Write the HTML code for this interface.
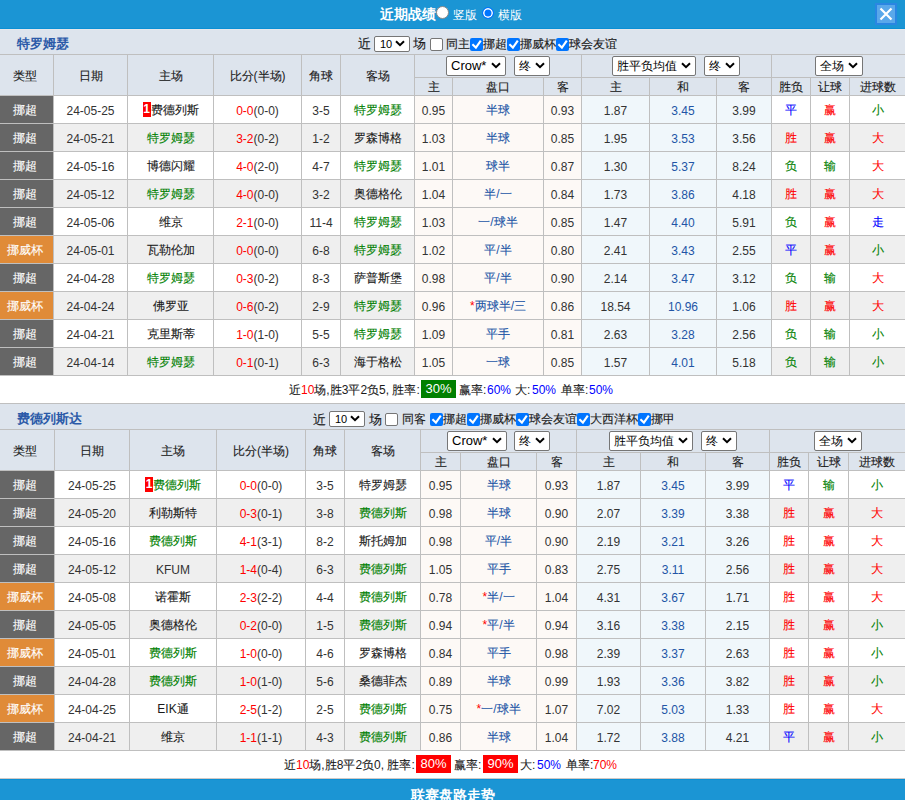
<!DOCTYPE html><html><head><meta charset="utf-8"><style>
*{margin:0;padding:0;box-sizing:content-box}
html,body{width:905px;height:800px;overflow:hidden;background:#fff}
body{position:relative;font-family:"Liberation Sans",sans-serif;font-size:12px;color:#333}
body>div,body>svg{position:absolute}
.t{white-space:nowrap}
.k{-webkit-text-stroke:0.12px currentColor}
.sel{position:absolute;background:#fff;border:1px solid #767676;border-radius:2px;color:#000}
.cb{position:absolute;width:11px;height:11px;border:1px solid #767676;border-radius:2px;background:#fff}
.cb.on{width:13px;height:13px;border:0;background:#0075ff}
.radio{position:absolute;width:11px;height:11px;border:1px solid #888;border-radius:50%;background:#fff}
.radio.on{width:10px;height:10px;border:1px solid #0075ff;box-shadow:inset 0 0 0 1.5px #fff;background:#0075ff}
.badge{display:inline-block;background:#f00;color:#fff;font-size:12px;line-height:15px;height:15px;width:8px;text-align:center;vertical-align:middle;position:relative;top:-1px;font-weight:bold}
.box{display:inline-block;color:#fff;font-size:13px;line-height:17px;height:17px;padding:0 3px;vertical-align:middle;position:relative;top:-1px}
.sum{font-size:12px;color:#1a1a1a}
</style></head><body><div style="left:0px;top:0px;width:905px;height:28px;background:#1b95d4;"></div><div style="left:0px;top:28px;width:905px;height:1px;background:#0b8fd4;"></div><div style="left:0px;top:29px;width:905px;height:1px;background:#e6e7eb;"></div><div class="t" style="left:380px;top:0;height:28px;line-height:28px;font-size:14px;font-weight:bold;color:#fff">近期战绩</div><div class="radio" style="left:436px;top:6px"></div><div class="t" style="left:453px;top:1px;height:28px;line-height:28px;font-size:12px;color:#fff">竖版</div><div class="radio on" style="left:482px;top:7px"></div><div class="t" style="left:498px;top:1px;height:28px;line-height:28px;font-size:12px;color:#fff">横版</div><div style="left:875px;top:3px;width:22px;height:22px;background:#2a86e2;"></div><div style="left:877px;top:5px;width:18px;height:18px;background:#5aa8ea;"></div><svg style="position:absolute;left:875px;top:3px" width="22" height="22" viewBox="0 0 22 22"><path d="M5.5 5.5 L16.5 16.5 M16.5 5.5 L5.5 16.5" stroke="#fff" stroke-width="2.2" fill="none"/></svg><div style="left:0px;top:30px;width:905px;height:65px;background:#dde4ed;"></div><div class="t" style="left:17px;top:32px;width:200px;height:24px;line-height:24px;color:#2b5aa8;font-size:13px;text-align:left;font-weight:bold">特罗姆瑟</div><div class="t" style="left:358px;top:32px;height:24px;line-height:24px;font-size:13px;color:#1a1a1a"><span class="k">近</span></div><div class="sel" style="left:374px;top:36px;width:34px;height:14px;"><span style="position:absolute;left:5px;top:0;line-height:14px;font-size:11px;white-space:nowrap">10</span><svg width="10" height="7" viewBox="0 0 10 7" style="position:absolute;right:4px;top:3px"><path d="M1 1.2 L5 5.2 L9 1.2" fill="none" stroke="#000" stroke-width="2"/></svg></div><div class="t" style="left:413px;top:32px;height:24px;line-height:24px;font-size:13px;color:#1a1a1a"><span class="k">场</span></div><div class="cb" style="left:430px;top:38px"></div><div class="t" style="left:446px;top:32px;height:24px;line-height:24px;font-size:12px;color:#1a1a1a"><span class="k">同主</span></div><div class="cb on" style="left:470px;top:38px"><svg width="13" height="13" viewBox="0 0 13 13" style="position:absolute;left:0;top:0"><path d="M2.4 6.3 L5.9 9.6 L10.8 2.6" fill="none" stroke="#fff" stroke-width="2.1"/></svg></div><div class="t" style="left:483px;top:32px;height:24px;line-height:24px;font-size:12px;color:#1a1a1a"><span class="k">挪超</span></div><div class="cb on" style="left:507px;top:38px"><svg width="13" height="13" viewBox="0 0 13 13" style="position:absolute;left:0;top:0"><path d="M2.4 6.3 L5.9 9.6 L10.8 2.6" fill="none" stroke="#fff" stroke-width="2.1"/></svg></div><div class="t" style="left:520px;top:32px;height:24px;line-height:24px;font-size:12px;color:#1a1a1a"><span class="k">挪威杯</span></div><div class="cb on" style="left:556px;top:38px"><svg width="13" height="13" viewBox="0 0 13 13" style="position:absolute;left:0;top:0"><path d="M2.4 6.3 L5.9 9.6 L10.8 2.6" fill="none" stroke="#fff" stroke-width="2.1"/></svg></div><div class="t" style="left:569px;top:32px;height:24px;line-height:24px;font-size:12px;color:#1a1a1a"><span class="k">球会友谊</span></div><div style="left:0px;top:54px;width:905px;height:1px;background:#bfbfbf;"></div><div style="left:414px;top:77px;width:491px;height:1px;background:#bfbfbf;"></div><div style="left:0px;top:95px;width:905px;height:1px;background:#bfbfbf;"></div><div style="left:53px;top:54px;width:1px;height:41px;background:#bfbfbf;"></div><div style="left:127px;top:54px;width:1px;height:41px;background:#bfbfbf;"></div><div style="left:213px;top:54px;width:1px;height:41px;background:#bfbfbf;"></div><div style="left:301px;top:54px;width:1px;height:41px;background:#bfbfbf;"></div><div style="left:340px;top:54px;width:1px;height:41px;background:#bfbfbf;"></div><div style="left:414px;top:54px;width:1px;height:41px;background:#bfbfbf;"></div><div style="left:581px;top:54px;width:1px;height:41px;background:#bfbfbf;"></div><div style="left:771px;top:54px;width:1px;height:41px;background:#bfbfbf;"></div><div style="left:452px;top:77px;width:1px;height:18px;background:#bfbfbf;"></div><div style="left:543px;top:77px;width:1px;height:18px;background:#bfbfbf;"></div><div style="left:649px;top:77px;width:1px;height:18px;background:#bfbfbf;"></div><div style="left:716px;top:77px;width:1px;height:18px;background:#bfbfbf;"></div><div style="left:810px;top:77px;width:1px;height:18px;background:#bfbfbf;"></div><div style="left:849px;top:77px;width:1px;height:18px;background:#bfbfbf;"></div><div class="t" style="left:-2px;top:56px;width:53px;height:40px;line-height:40px;color:#1a1a1a;font-size:12px;text-align:center;"><span class="k">类型</span></div><div class="t" style="left:54px;top:56px;width:73px;height:40px;line-height:40px;color:#1a1a1a;font-size:12px;text-align:center;"><span class="k">日期</span></div><div class="t" style="left:128px;top:56px;width:85px;height:40px;line-height:40px;color:#1a1a1a;font-size:12px;text-align:center;"><span class="k">主场</span></div><div class="t" style="left:214px;top:56px;width:87px;height:40px;line-height:40px;color:#1a1a1a;font-size:12px;text-align:center;"><span class="k">比分</span>(<span class="k">半场</span>)</div><div class="t" style="left:302px;top:56px;width:38px;height:40px;line-height:40px;color:#1a1a1a;font-size:12px;text-align:center;"><span class="k">角球</span></div><div class="t" style="left:341px;top:56px;width:73px;height:40px;line-height:40px;color:#1a1a1a;font-size:12px;text-align:center;"><span class="k">客场</span></div><div class="t" style="left:415px;top:79px;width:37px;height:17px;line-height:17px;color:#1a1a1a;font-size:12px;text-align:center;"><span class="k">主</span></div><div class="t" style="left:453px;top:79px;width:90px;height:17px;line-height:17px;color:#1a1a1a;font-size:12px;text-align:center;"><span class="k">盘口</span></div><div class="t" style="left:544px;top:79px;width:37px;height:17px;line-height:17px;color:#1a1a1a;font-size:12px;text-align:center;"><span class="k">客</span></div><div class="t" style="left:582px;top:79px;width:67px;height:17px;line-height:17px;color:#1a1a1a;font-size:12px;text-align:center;"><span class="k">主</span></div><div class="t" style="left:650px;top:79px;width:66px;height:17px;line-height:17px;color:#1a1a1a;font-size:12px;text-align:center;"><span class="k">和</span></div><div class="t" style="left:717px;top:79px;width:54px;height:17px;line-height:17px;color:#1a1a1a;font-size:12px;text-align:center;"><span class="k">客</span></div><div class="t" style="left:772px;top:79px;width:38px;height:17px;line-height:17px;color:#1a1a1a;font-size:12px;text-align:center;"><span class="k">胜负</span></div><div class="t" style="left:811px;top:79px;width:38px;height:17px;line-height:17px;color:#1a1a1a;font-size:12px;text-align:center;"><span class="k">让球</span></div><div class="t" style="left:850px;top:79px;width:55px;height:17px;line-height:17px;color:#1a1a1a;font-size:12px;text-align:center;"><span class="k">进球数</span></div><div class="sel" style="left:446px;top:56px;width:58px;height:18px;"><span style="position:absolute;left:4px;top:0;line-height:18px;font-size:13px;white-space:nowrap">Crow*</span><svg width="10" height="7" viewBox="0 0 10 7" style="position:absolute;right:4px;top:5px"><path d="M1 1.2 L5 5.2 L9 1.2" fill="none" stroke="#000" stroke-width="2"/></svg></div><div class="sel" style="left:514px;top:56px;width:34px;height:18px;"><span style="position:absolute;left:4px;top:0;line-height:18px;font-size:12px;white-space:nowrap">终</span><svg width="10" height="7" viewBox="0 0 10 7" style="position:absolute;right:4px;top:5px"><path d="M1 1.2 L5 5.2 L9 1.2" fill="none" stroke="#000" stroke-width="2"/></svg></div><div class="sel" style="left:612px;top:56px;width:82px;height:18px;"><span style="position:absolute;left:4px;top:0;line-height:18px;font-size:12px;white-space:nowrap">胜平负均值</span><svg width="10" height="7" viewBox="0 0 10 7" style="position:absolute;right:4px;top:5px"><path d="M1 1.2 L5 5.2 L9 1.2" fill="none" stroke="#000" stroke-width="2"/></svg></div><div class="sel" style="left:704px;top:56px;width:34px;height:18px;"><span style="position:absolute;left:4px;top:0;line-height:18px;font-size:12px;white-space:nowrap">终</span><svg width="10" height="7" viewBox="0 0 10 7" style="position:absolute;right:4px;top:5px"><path d="M1 1.2 L5 5.2 L9 1.2" fill="none" stroke="#000" stroke-width="2"/></svg></div><div class="sel" style="left:815px;top:56px;width:46px;height:18px;"><span style="position:absolute;left:4px;top:0;line-height:18px;font-size:12px;white-space:nowrap">全场</span><svg width="10" height="7" viewBox="0 0 10 7" style="position:absolute;right:4px;top:5px"><path d="M1 1.2 L5 5.2 L9 1.2" fill="none" stroke="#000" stroke-width="2"/></svg></div><div style="left:0px;top:96px;width:53px;height:27px;background:#666666;"></div><div style="left:54px;top:96px;width:73px;height:27px;background:#ffffff;"></div><div style="left:128px;top:96px;width:85px;height:27px;background:#ffffff;"></div><div style="left:214px;top:96px;width:87px;height:27px;background:#ffffff;"></div><div style="left:302px;top:96px;width:38px;height:27px;background:#ffffff;"></div><div style="left:341px;top:96px;width:73px;height:27px;background:#ffffff;"></div><div style="left:415px;top:96px;width:37px;height:27px;background:#fdf9f6;"></div><div style="left:453px;top:96px;width:90px;height:27px;background:#fdf9f6;"></div><div style="left:544px;top:96px;width:37px;height:27px;background:#fdf9f6;"></div><div style="left:582px;top:96px;width:67px;height:27px;background:#f0f7fb;"></div><div style="left:650px;top:96px;width:66px;height:27px;background:#f0f7fb;"></div><div style="left:717px;top:96px;width:54px;height:27px;background:#f0f7fb;"></div><div style="left:772px;top:96px;width:38px;height:27px;background:#ffffff;"></div><div style="left:811px;top:96px;width:38px;height:27px;background:#ffffff;"></div><div style="left:850px;top:96px;width:55px;height:27px;background:#ffffff;"></div><div class="t" style="left:-2px;top:97px;width:53px;height:27px;line-height:27px;color:#fff;font-size:12px;text-align:center;"><span class="k">挪超</span></div><div class="t" style="left:54px;top:98px;width:73px;height:27px;line-height:27px;color:#333;font-size:12px;text-align:center;">24-05-25</div><div class="t" style="left:128px;top:97px;width:85px;height:27px;line-height:27px;color:#1a1a1a;font-size:12px;text-align:center;"><span class="badge">1</span><span class="k">费德列斯</span></div><div class="t" style="left:214px;top:98px;width:87px;height:27px;line-height:27px;color:#333;font-size:12px;text-align:center;"><span style="color:#ff0000">0-0</span><span style="color:#333">(0-0)</span></div><div class="t" style="left:302px;top:98px;width:38px;height:27px;line-height:27px;color:#333;font-size:12px;text-align:center;">3-5</div><div class="t" style="left:341px;top:97px;width:73px;height:27px;line-height:27px;color:#008000;font-size:12px;text-align:center;"><span class="k">特罗姆瑟</span></div><div class="t" style="left:415px;top:98px;width:37px;height:27px;line-height:27px;color:#333;font-size:12px;text-align:center;">0.95</div><div class="t" style="left:453px;top:97px;width:90px;height:27px;line-height:27px;color:#2255a6;font-size:12px;text-align:center;"><span class="k">半球</span></div><div class="t" style="left:544px;top:98px;width:37px;height:27px;line-height:27px;color:#333;font-size:12px;text-align:center;">0.93</div><div class="t" style="left:582px;top:98px;width:67px;height:27px;line-height:27px;color:#333;font-size:12px;text-align:center;">1.87</div><div class="t" style="left:650px;top:98px;width:66px;height:27px;line-height:27px;color:#2255a6;font-size:12px;text-align:center;">3.45</div><div class="t" style="left:717px;top:98px;width:54px;height:27px;line-height:27px;color:#333;font-size:12px;text-align:center;">3.99</div><div class="t" style="left:772px;top:97px;width:38px;height:27px;line-height:27px;color:#0000ff;font-size:12px;text-align:center;"><span class="k">平</span></div><div class="t" style="left:811px;top:97px;width:38px;height:27px;line-height:27px;color:#ff0000;font-size:12px;text-align:center;"><span class="k">赢</span></div><div class="t" style="left:850px;top:97px;width:55px;height:27px;line-height:27px;color:#008000;font-size:12px;text-align:center;"><span class="k">小</span></div><div style="left:0px;top:123px;width:905px;height:1px;background:#bfbfbf;"></div><div style="left:53px;top:96px;width:1px;height:27px;background:#bfbfbf;"></div><div style="left:127px;top:96px;width:1px;height:27px;background:#bfbfbf;"></div><div style="left:213px;top:96px;width:1px;height:27px;background:#bfbfbf;"></div><div style="left:301px;top:96px;width:1px;height:27px;background:#bfbfbf;"></div><div style="left:340px;top:96px;width:1px;height:27px;background:#bfbfbf;"></div><div style="left:414px;top:96px;width:1px;height:27px;background:#bfbfbf;"></div><div style="left:452px;top:96px;width:1px;height:27px;background:#bfbfbf;"></div><div style="left:543px;top:96px;width:1px;height:27px;background:#bfbfbf;"></div><div style="left:581px;top:96px;width:1px;height:27px;background:#bfbfbf;"></div><div style="left:649px;top:96px;width:1px;height:27px;background:#bfbfbf;"></div><div style="left:716px;top:96px;width:1px;height:27px;background:#bfbfbf;"></div><div style="left:771px;top:96px;width:1px;height:27px;background:#bfbfbf;"></div><div style="left:810px;top:96px;width:1px;height:27px;background:#bfbfbf;"></div><div style="left:849px;top:96px;width:1px;height:27px;background:#bfbfbf;"></div><div style="left:0px;top:124px;width:53px;height:27px;background:#666666;"></div><div style="left:54px;top:124px;width:73px;height:27px;background:#efefef;"></div><div style="left:128px;top:124px;width:85px;height:27px;background:#efefef;"></div><div style="left:214px;top:124px;width:87px;height:27px;background:#efefef;"></div><div style="left:302px;top:124px;width:38px;height:27px;background:#efefef;"></div><div style="left:341px;top:124px;width:73px;height:27px;background:#efefef;"></div><div style="left:415px;top:124px;width:37px;height:27px;background:#fdf9f6;"></div><div style="left:453px;top:124px;width:90px;height:27px;background:#fdf9f6;"></div><div style="left:544px;top:124px;width:37px;height:27px;background:#fdf9f6;"></div><div style="left:582px;top:124px;width:67px;height:27px;background:#f0f7fb;"></div><div style="left:650px;top:124px;width:66px;height:27px;background:#f0f7fb;"></div><div style="left:717px;top:124px;width:54px;height:27px;background:#f0f7fb;"></div><div style="left:772px;top:124px;width:38px;height:27px;background:#efefef;"></div><div style="left:811px;top:124px;width:38px;height:27px;background:#efefef;"></div><div style="left:850px;top:124px;width:55px;height:27px;background:#efefef;"></div><div class="t" style="left:-2px;top:125px;width:53px;height:27px;line-height:27px;color:#fff;font-size:12px;text-align:center;"><span class="k">挪超</span></div><div class="t" style="left:54px;top:126px;width:73px;height:27px;line-height:27px;color:#333;font-size:12px;text-align:center;">24-05-21</div><div class="t" style="left:128px;top:125px;width:85px;height:27px;line-height:27px;color:#008000;font-size:12px;text-align:center;"><span class="k">特罗姆瑟</span></div><div class="t" style="left:214px;top:126px;width:87px;height:27px;line-height:27px;color:#333;font-size:12px;text-align:center;"><span style="color:#ff0000">3-2</span><span style="color:#333">(0-2)</span></div><div class="t" style="left:302px;top:126px;width:38px;height:27px;line-height:27px;color:#333;font-size:12px;text-align:center;">1-2</div><div class="t" style="left:341px;top:125px;width:73px;height:27px;line-height:27px;color:#1a1a1a;font-size:12px;text-align:center;"><span class="k">罗森博格</span></div><div class="t" style="left:415px;top:126px;width:37px;height:27px;line-height:27px;color:#333;font-size:12px;text-align:center;">1.03</div><div class="t" style="left:453px;top:125px;width:90px;height:27px;line-height:27px;color:#2255a6;font-size:12px;text-align:center;"><span class="k">半球</span></div><div class="t" style="left:544px;top:126px;width:37px;height:27px;line-height:27px;color:#333;font-size:12px;text-align:center;">0.85</div><div class="t" style="left:582px;top:126px;width:67px;height:27px;line-height:27px;color:#333;font-size:12px;text-align:center;">1.95</div><div class="t" style="left:650px;top:126px;width:66px;height:27px;line-height:27px;color:#2255a6;font-size:12px;text-align:center;">3.53</div><div class="t" style="left:717px;top:126px;width:54px;height:27px;line-height:27px;color:#333;font-size:12px;text-align:center;">3.56</div><div class="t" style="left:772px;top:125px;width:38px;height:27px;line-height:27px;color:#ff0000;font-size:12px;text-align:center;"><span class="k">胜</span></div><div class="t" style="left:811px;top:125px;width:38px;height:27px;line-height:27px;color:#ff0000;font-size:12px;text-align:center;"><span class="k">赢</span></div><div class="t" style="left:850px;top:125px;width:55px;height:27px;line-height:27px;color:#ff0000;font-size:12px;text-align:center;"><span class="k">大</span></div><div style="left:0px;top:151px;width:905px;height:1px;background:#bfbfbf;"></div><div style="left:53px;top:124px;width:1px;height:27px;background:#bfbfbf;"></div><div style="left:127px;top:124px;width:1px;height:27px;background:#bfbfbf;"></div><div style="left:213px;top:124px;width:1px;height:27px;background:#bfbfbf;"></div><div style="left:301px;top:124px;width:1px;height:27px;background:#bfbfbf;"></div><div style="left:340px;top:124px;width:1px;height:27px;background:#bfbfbf;"></div><div style="left:414px;top:124px;width:1px;height:27px;background:#bfbfbf;"></div><div style="left:452px;top:124px;width:1px;height:27px;background:#bfbfbf;"></div><div style="left:543px;top:124px;width:1px;height:27px;background:#bfbfbf;"></div><div style="left:581px;top:124px;width:1px;height:27px;background:#bfbfbf;"></div><div style="left:649px;top:124px;width:1px;height:27px;background:#bfbfbf;"></div><div style="left:716px;top:124px;width:1px;height:27px;background:#bfbfbf;"></div><div style="left:771px;top:124px;width:1px;height:27px;background:#bfbfbf;"></div><div style="left:810px;top:124px;width:1px;height:27px;background:#bfbfbf;"></div><div style="left:849px;top:124px;width:1px;height:27px;background:#bfbfbf;"></div><div style="left:0px;top:152px;width:53px;height:27px;background:#666666;"></div><div style="left:54px;top:152px;width:73px;height:27px;background:#ffffff;"></div><div style="left:128px;top:152px;width:85px;height:27px;background:#ffffff;"></div><div style="left:214px;top:152px;width:87px;height:27px;background:#ffffff;"></div><div style="left:302px;top:152px;width:38px;height:27px;background:#ffffff;"></div><div style="left:341px;top:152px;width:73px;height:27px;background:#ffffff;"></div><div style="left:415px;top:152px;width:37px;height:27px;background:#fdf9f6;"></div><div style="left:453px;top:152px;width:90px;height:27px;background:#fdf9f6;"></div><div style="left:544px;top:152px;width:37px;height:27px;background:#fdf9f6;"></div><div style="left:582px;top:152px;width:67px;height:27px;background:#f0f7fb;"></div><div style="left:650px;top:152px;width:66px;height:27px;background:#f0f7fb;"></div><div style="left:717px;top:152px;width:54px;height:27px;background:#f0f7fb;"></div><div style="left:772px;top:152px;width:38px;height:27px;background:#ffffff;"></div><div style="left:811px;top:152px;width:38px;height:27px;background:#ffffff;"></div><div style="left:850px;top:152px;width:55px;height:27px;background:#ffffff;"></div><div class="t" style="left:-2px;top:153px;width:53px;height:27px;line-height:27px;color:#fff;font-size:12px;text-align:center;"><span class="k">挪超</span></div><div class="t" style="left:54px;top:154px;width:73px;height:27px;line-height:27px;color:#333;font-size:12px;text-align:center;">24-05-16</div><div class="t" style="left:128px;top:153px;width:85px;height:27px;line-height:27px;color:#1a1a1a;font-size:12px;text-align:center;"><span class="k">博德闪耀</span></div><div class="t" style="left:214px;top:154px;width:87px;height:27px;line-height:27px;color:#333;font-size:12px;text-align:center;"><span style="color:#ff0000">4-0</span><span style="color:#333">(2-0)</span></div><div class="t" style="left:302px;top:154px;width:38px;height:27px;line-height:27px;color:#333;font-size:12px;text-align:center;">4-7</div><div class="t" style="left:341px;top:153px;width:73px;height:27px;line-height:27px;color:#008000;font-size:12px;text-align:center;"><span class="k">特罗姆瑟</span></div><div class="t" style="left:415px;top:154px;width:37px;height:27px;line-height:27px;color:#333;font-size:12px;text-align:center;">1.01</div><div class="t" style="left:453px;top:153px;width:90px;height:27px;line-height:27px;color:#2255a6;font-size:12px;text-align:center;"><span class="k">球半</span></div><div class="t" style="left:544px;top:154px;width:37px;height:27px;line-height:27px;color:#333;font-size:12px;text-align:center;">0.87</div><div class="t" style="left:582px;top:154px;width:67px;height:27px;line-height:27px;color:#333;font-size:12px;text-align:center;">1.30</div><div class="t" style="left:650px;top:154px;width:66px;height:27px;line-height:27px;color:#2255a6;font-size:12px;text-align:center;">5.37</div><div class="t" style="left:717px;top:154px;width:54px;height:27px;line-height:27px;color:#333;font-size:12px;text-align:center;">8.24</div><div class="t" style="left:772px;top:153px;width:38px;height:27px;line-height:27px;color:#008000;font-size:12px;text-align:center;"><span class="k">负</span></div><div class="t" style="left:811px;top:153px;width:38px;height:27px;line-height:27px;color:#008000;font-size:12px;text-align:center;"><span class="k">输</span></div><div class="t" style="left:850px;top:153px;width:55px;height:27px;line-height:27px;color:#ff0000;font-size:12px;text-align:center;"><span class="k">大</span></div><div style="left:0px;top:179px;width:905px;height:1px;background:#bfbfbf;"></div><div style="left:53px;top:152px;width:1px;height:27px;background:#bfbfbf;"></div><div style="left:127px;top:152px;width:1px;height:27px;background:#bfbfbf;"></div><div style="left:213px;top:152px;width:1px;height:27px;background:#bfbfbf;"></div><div style="left:301px;top:152px;width:1px;height:27px;background:#bfbfbf;"></div><div style="left:340px;top:152px;width:1px;height:27px;background:#bfbfbf;"></div><div style="left:414px;top:152px;width:1px;height:27px;background:#bfbfbf;"></div><div style="left:452px;top:152px;width:1px;height:27px;background:#bfbfbf;"></div><div style="left:543px;top:152px;width:1px;height:27px;background:#bfbfbf;"></div><div style="left:581px;top:152px;width:1px;height:27px;background:#bfbfbf;"></div><div style="left:649px;top:152px;width:1px;height:27px;background:#bfbfbf;"></div><div style="left:716px;top:152px;width:1px;height:27px;background:#bfbfbf;"></div><div style="left:771px;top:152px;width:1px;height:27px;background:#bfbfbf;"></div><div style="left:810px;top:152px;width:1px;height:27px;background:#bfbfbf;"></div><div style="left:849px;top:152px;width:1px;height:27px;background:#bfbfbf;"></div><div style="left:0px;top:180px;width:53px;height:27px;background:#666666;"></div><div style="left:54px;top:180px;width:73px;height:27px;background:#efefef;"></div><div style="left:128px;top:180px;width:85px;height:27px;background:#efefef;"></div><div style="left:214px;top:180px;width:87px;height:27px;background:#efefef;"></div><div style="left:302px;top:180px;width:38px;height:27px;background:#efefef;"></div><div style="left:341px;top:180px;width:73px;height:27px;background:#efefef;"></div><div style="left:415px;top:180px;width:37px;height:27px;background:#fdf9f6;"></div><div style="left:453px;top:180px;width:90px;height:27px;background:#fdf9f6;"></div><div style="left:544px;top:180px;width:37px;height:27px;background:#fdf9f6;"></div><div style="left:582px;top:180px;width:67px;height:27px;background:#f0f7fb;"></div><div style="left:650px;top:180px;width:66px;height:27px;background:#f0f7fb;"></div><div style="left:717px;top:180px;width:54px;height:27px;background:#f0f7fb;"></div><div style="left:772px;top:180px;width:38px;height:27px;background:#efefef;"></div><div style="left:811px;top:180px;width:38px;height:27px;background:#efefef;"></div><div style="left:850px;top:180px;width:55px;height:27px;background:#efefef;"></div><div class="t" style="left:-2px;top:181px;width:53px;height:27px;line-height:27px;color:#fff;font-size:12px;text-align:center;"><span class="k">挪超</span></div><div class="t" style="left:54px;top:182px;width:73px;height:27px;line-height:27px;color:#333;font-size:12px;text-align:center;">24-05-12</div><div class="t" style="left:128px;top:181px;width:85px;height:27px;line-height:27px;color:#008000;font-size:12px;text-align:center;"><span class="k">特罗姆瑟</span></div><div class="t" style="left:214px;top:182px;width:87px;height:27px;line-height:27px;color:#333;font-size:12px;text-align:center;"><span style="color:#ff0000">4-0</span><span style="color:#333">(0-0)</span></div><div class="t" style="left:302px;top:182px;width:38px;height:27px;line-height:27px;color:#333;font-size:12px;text-align:center;">3-2</div><div class="t" style="left:341px;top:181px;width:73px;height:27px;line-height:27px;color:#1a1a1a;font-size:12px;text-align:center;"><span class="k">奥德格伦</span></div><div class="t" style="left:415px;top:182px;width:37px;height:27px;line-height:27px;color:#333;font-size:12px;text-align:center;">1.04</div><div class="t" style="left:453px;top:181px;width:90px;height:27px;line-height:27px;color:#2255a6;font-size:12px;text-align:center;"><span class="k">半</span>/<span class="k">一</span></div><div class="t" style="left:544px;top:182px;width:37px;height:27px;line-height:27px;color:#333;font-size:12px;text-align:center;">0.84</div><div class="t" style="left:582px;top:182px;width:67px;height:27px;line-height:27px;color:#333;font-size:12px;text-align:center;">1.73</div><div class="t" style="left:650px;top:182px;width:66px;height:27px;line-height:27px;color:#2255a6;font-size:12px;text-align:center;">3.86</div><div class="t" style="left:717px;top:182px;width:54px;height:27px;line-height:27px;color:#333;font-size:12px;text-align:center;">4.18</div><div class="t" style="left:772px;top:181px;width:38px;height:27px;line-height:27px;color:#ff0000;font-size:12px;text-align:center;"><span class="k">胜</span></div><div class="t" style="left:811px;top:181px;width:38px;height:27px;line-height:27px;color:#ff0000;font-size:12px;text-align:center;"><span class="k">赢</span></div><div class="t" style="left:850px;top:181px;width:55px;height:27px;line-height:27px;color:#ff0000;font-size:12px;text-align:center;"><span class="k">大</span></div><div style="left:0px;top:207px;width:905px;height:1px;background:#bfbfbf;"></div><div style="left:53px;top:180px;width:1px;height:27px;background:#bfbfbf;"></div><div style="left:127px;top:180px;width:1px;height:27px;background:#bfbfbf;"></div><div style="left:213px;top:180px;width:1px;height:27px;background:#bfbfbf;"></div><div style="left:301px;top:180px;width:1px;height:27px;background:#bfbfbf;"></div><div style="left:340px;top:180px;width:1px;height:27px;background:#bfbfbf;"></div><div style="left:414px;top:180px;width:1px;height:27px;background:#bfbfbf;"></div><div style="left:452px;top:180px;width:1px;height:27px;background:#bfbfbf;"></div><div style="left:543px;top:180px;width:1px;height:27px;background:#bfbfbf;"></div><div style="left:581px;top:180px;width:1px;height:27px;background:#bfbfbf;"></div><div style="left:649px;top:180px;width:1px;height:27px;background:#bfbfbf;"></div><div style="left:716px;top:180px;width:1px;height:27px;background:#bfbfbf;"></div><div style="left:771px;top:180px;width:1px;height:27px;background:#bfbfbf;"></div><div style="left:810px;top:180px;width:1px;height:27px;background:#bfbfbf;"></div><div style="left:849px;top:180px;width:1px;height:27px;background:#bfbfbf;"></div><div style="left:0px;top:208px;width:53px;height:27px;background:#666666;"></div><div style="left:54px;top:208px;width:73px;height:27px;background:#ffffff;"></div><div style="left:128px;top:208px;width:85px;height:27px;background:#ffffff;"></div><div style="left:214px;top:208px;width:87px;height:27px;background:#ffffff;"></div><div style="left:302px;top:208px;width:38px;height:27px;background:#ffffff;"></div><div style="left:341px;top:208px;width:73px;height:27px;background:#ffffff;"></div><div style="left:415px;top:208px;width:37px;height:27px;background:#fdf9f6;"></div><div style="left:453px;top:208px;width:90px;height:27px;background:#fdf9f6;"></div><div style="left:544px;top:208px;width:37px;height:27px;background:#fdf9f6;"></div><div style="left:582px;top:208px;width:67px;height:27px;background:#f0f7fb;"></div><div style="left:650px;top:208px;width:66px;height:27px;background:#f0f7fb;"></div><div style="left:717px;top:208px;width:54px;height:27px;background:#f0f7fb;"></div><div style="left:772px;top:208px;width:38px;height:27px;background:#ffffff;"></div><div style="left:811px;top:208px;width:38px;height:27px;background:#ffffff;"></div><div style="left:850px;top:208px;width:55px;height:27px;background:#ffffff;"></div><div class="t" style="left:-2px;top:209px;width:53px;height:27px;line-height:27px;color:#fff;font-size:12px;text-align:center;"><span class="k">挪超</span></div><div class="t" style="left:54px;top:210px;width:73px;height:27px;line-height:27px;color:#333;font-size:12px;text-align:center;">24-05-06</div><div class="t" style="left:128px;top:209px;width:85px;height:27px;line-height:27px;color:#1a1a1a;font-size:12px;text-align:center;"><span class="k">维京</span></div><div class="t" style="left:214px;top:210px;width:87px;height:27px;line-height:27px;color:#333;font-size:12px;text-align:center;"><span style="color:#ff0000">2-1</span><span style="color:#333">(0-0)</span></div><div class="t" style="left:302px;top:210px;width:38px;height:27px;line-height:27px;color:#333;font-size:12px;text-align:center;">11-4</div><div class="t" style="left:341px;top:209px;width:73px;height:27px;line-height:27px;color:#008000;font-size:12px;text-align:center;"><span class="k">特罗姆瑟</span></div><div class="t" style="left:415px;top:210px;width:37px;height:27px;line-height:27px;color:#333;font-size:12px;text-align:center;">1.03</div><div class="t" style="left:453px;top:209px;width:90px;height:27px;line-height:27px;color:#2255a6;font-size:12px;text-align:center;"><span class="k">一</span>/<span class="k">球半</span></div><div class="t" style="left:544px;top:210px;width:37px;height:27px;line-height:27px;color:#333;font-size:12px;text-align:center;">0.85</div><div class="t" style="left:582px;top:210px;width:67px;height:27px;line-height:27px;color:#333;font-size:12px;text-align:center;">1.47</div><div class="t" style="left:650px;top:210px;width:66px;height:27px;line-height:27px;color:#2255a6;font-size:12px;text-align:center;">4.40</div><div class="t" style="left:717px;top:210px;width:54px;height:27px;line-height:27px;color:#333;font-size:12px;text-align:center;">5.91</div><div class="t" style="left:772px;top:209px;width:38px;height:27px;line-height:27px;color:#008000;font-size:12px;text-align:center;"><span class="k">负</span></div><div class="t" style="left:811px;top:209px;width:38px;height:27px;line-height:27px;color:#ff0000;font-size:12px;text-align:center;"><span class="k">赢</span></div><div class="t" style="left:850px;top:209px;width:55px;height:27px;line-height:27px;color:#0000ff;font-size:12px;text-align:center;"><span class="k">走</span></div><div style="left:0px;top:235px;width:905px;height:1px;background:#bfbfbf;"></div><div style="left:53px;top:208px;width:1px;height:27px;background:#bfbfbf;"></div><div style="left:127px;top:208px;width:1px;height:27px;background:#bfbfbf;"></div><div style="left:213px;top:208px;width:1px;height:27px;background:#bfbfbf;"></div><div style="left:301px;top:208px;width:1px;height:27px;background:#bfbfbf;"></div><div style="left:340px;top:208px;width:1px;height:27px;background:#bfbfbf;"></div><div style="left:414px;top:208px;width:1px;height:27px;background:#bfbfbf;"></div><div style="left:452px;top:208px;width:1px;height:27px;background:#bfbfbf;"></div><div style="left:543px;top:208px;width:1px;height:27px;background:#bfbfbf;"></div><div style="left:581px;top:208px;width:1px;height:27px;background:#bfbfbf;"></div><div style="left:649px;top:208px;width:1px;height:27px;background:#bfbfbf;"></div><div style="left:716px;top:208px;width:1px;height:27px;background:#bfbfbf;"></div><div style="left:771px;top:208px;width:1px;height:27px;background:#bfbfbf;"></div><div style="left:810px;top:208px;width:1px;height:27px;background:#bfbfbf;"></div><div style="left:849px;top:208px;width:1px;height:27px;background:#bfbfbf;"></div><div style="left:0px;top:236px;width:53px;height:27px;background:#e08b38;"></div><div style="left:54px;top:236px;width:73px;height:27px;background:#efefef;"></div><div style="left:128px;top:236px;width:85px;height:27px;background:#efefef;"></div><div style="left:214px;top:236px;width:87px;height:27px;background:#efefef;"></div><div style="left:302px;top:236px;width:38px;height:27px;background:#efefef;"></div><div style="left:341px;top:236px;width:73px;height:27px;background:#efefef;"></div><div style="left:415px;top:236px;width:37px;height:27px;background:#fdf9f6;"></div><div style="left:453px;top:236px;width:90px;height:27px;background:#fdf9f6;"></div><div style="left:544px;top:236px;width:37px;height:27px;background:#fdf9f6;"></div><div style="left:582px;top:236px;width:67px;height:27px;background:#f0f7fb;"></div><div style="left:650px;top:236px;width:66px;height:27px;background:#f0f7fb;"></div><div style="left:717px;top:236px;width:54px;height:27px;background:#f0f7fb;"></div><div style="left:772px;top:236px;width:38px;height:27px;background:#efefef;"></div><div style="left:811px;top:236px;width:38px;height:27px;background:#efefef;"></div><div style="left:850px;top:236px;width:55px;height:27px;background:#efefef;"></div><div class="t" style="left:-2px;top:237px;width:53px;height:27px;line-height:27px;color:#fff;font-size:12px;text-align:center;"><span class="k">挪威杯</span></div><div class="t" style="left:54px;top:238px;width:73px;height:27px;line-height:27px;color:#333;font-size:12px;text-align:center;">24-05-01</div><div class="t" style="left:128px;top:237px;width:85px;height:27px;line-height:27px;color:#1a1a1a;font-size:12px;text-align:center;"><span class="k">瓦勒伦加</span></div><div class="t" style="left:214px;top:238px;width:87px;height:27px;line-height:27px;color:#333;font-size:12px;text-align:center;"><span style="color:#ff0000">0-0</span><span style="color:#333">(0-0)</span></div><div class="t" style="left:302px;top:238px;width:38px;height:27px;line-height:27px;color:#333;font-size:12px;text-align:center;">6-8</div><div class="t" style="left:341px;top:237px;width:73px;height:27px;line-height:27px;color:#008000;font-size:12px;text-align:center;"><span class="k">特罗姆瑟</span></div><div class="t" style="left:415px;top:238px;width:37px;height:27px;line-height:27px;color:#333;font-size:12px;text-align:center;">1.02</div><div class="t" style="left:453px;top:237px;width:90px;height:27px;line-height:27px;color:#2255a6;font-size:12px;text-align:center;"><span class="k">平</span>/<span class="k">半</span></div><div class="t" style="left:544px;top:238px;width:37px;height:27px;line-height:27px;color:#333;font-size:12px;text-align:center;">0.80</div><div class="t" style="left:582px;top:238px;width:67px;height:27px;line-height:27px;color:#333;font-size:12px;text-align:center;">2.41</div><div class="t" style="left:650px;top:238px;width:66px;height:27px;line-height:27px;color:#2255a6;font-size:12px;text-align:center;">3.43</div><div class="t" style="left:717px;top:238px;width:54px;height:27px;line-height:27px;color:#333;font-size:12px;text-align:center;">2.55</div><div class="t" style="left:772px;top:237px;width:38px;height:27px;line-height:27px;color:#0000ff;font-size:12px;text-align:center;"><span class="k">平</span></div><div class="t" style="left:811px;top:237px;width:38px;height:27px;line-height:27px;color:#ff0000;font-size:12px;text-align:center;"><span class="k">赢</span></div><div class="t" style="left:850px;top:237px;width:55px;height:27px;line-height:27px;color:#008000;font-size:12px;text-align:center;"><span class="k">小</span></div><div style="left:0px;top:263px;width:905px;height:1px;background:#bfbfbf;"></div><div style="left:53px;top:236px;width:1px;height:27px;background:#bfbfbf;"></div><div style="left:127px;top:236px;width:1px;height:27px;background:#bfbfbf;"></div><div style="left:213px;top:236px;width:1px;height:27px;background:#bfbfbf;"></div><div style="left:301px;top:236px;width:1px;height:27px;background:#bfbfbf;"></div><div style="left:340px;top:236px;width:1px;height:27px;background:#bfbfbf;"></div><div style="left:414px;top:236px;width:1px;height:27px;background:#bfbfbf;"></div><div style="left:452px;top:236px;width:1px;height:27px;background:#bfbfbf;"></div><div style="left:543px;top:236px;width:1px;height:27px;background:#bfbfbf;"></div><div style="left:581px;top:236px;width:1px;height:27px;background:#bfbfbf;"></div><div style="left:649px;top:236px;width:1px;height:27px;background:#bfbfbf;"></div><div style="left:716px;top:236px;width:1px;height:27px;background:#bfbfbf;"></div><div style="left:771px;top:236px;width:1px;height:27px;background:#bfbfbf;"></div><div style="left:810px;top:236px;width:1px;height:27px;background:#bfbfbf;"></div><div style="left:849px;top:236px;width:1px;height:27px;background:#bfbfbf;"></div><div style="left:0px;top:264px;width:53px;height:27px;background:#666666;"></div><div style="left:54px;top:264px;width:73px;height:27px;background:#ffffff;"></div><div style="left:128px;top:264px;width:85px;height:27px;background:#ffffff;"></div><div style="left:214px;top:264px;width:87px;height:27px;background:#ffffff;"></div><div style="left:302px;top:264px;width:38px;height:27px;background:#ffffff;"></div><div style="left:341px;top:264px;width:73px;height:27px;background:#ffffff;"></div><div style="left:415px;top:264px;width:37px;height:27px;background:#fdf9f6;"></div><div style="left:453px;top:264px;width:90px;height:27px;background:#fdf9f6;"></div><div style="left:544px;top:264px;width:37px;height:27px;background:#fdf9f6;"></div><div style="left:582px;top:264px;width:67px;height:27px;background:#f0f7fb;"></div><div style="left:650px;top:264px;width:66px;height:27px;background:#f0f7fb;"></div><div style="left:717px;top:264px;width:54px;height:27px;background:#f0f7fb;"></div><div style="left:772px;top:264px;width:38px;height:27px;background:#ffffff;"></div><div style="left:811px;top:264px;width:38px;height:27px;background:#ffffff;"></div><div style="left:850px;top:264px;width:55px;height:27px;background:#ffffff;"></div><div class="t" style="left:-2px;top:265px;width:53px;height:27px;line-height:27px;color:#fff;font-size:12px;text-align:center;"><span class="k">挪超</span></div><div class="t" style="left:54px;top:266px;width:73px;height:27px;line-height:27px;color:#333;font-size:12px;text-align:center;">24-04-28</div><div class="t" style="left:128px;top:265px;width:85px;height:27px;line-height:27px;color:#008000;font-size:12px;text-align:center;"><span class="k">特罗姆瑟</span></div><div class="t" style="left:214px;top:266px;width:87px;height:27px;line-height:27px;color:#333;font-size:12px;text-align:center;"><span style="color:#ff0000">0-3</span><span style="color:#333">(0-2)</span></div><div class="t" style="left:302px;top:266px;width:38px;height:27px;line-height:27px;color:#333;font-size:12px;text-align:center;">8-3</div><div class="t" style="left:341px;top:265px;width:73px;height:27px;line-height:27px;color:#1a1a1a;font-size:12px;text-align:center;"><span class="k">萨普斯堡</span></div><div class="t" style="left:415px;top:266px;width:37px;height:27px;line-height:27px;color:#333;font-size:12px;text-align:center;">0.98</div><div class="t" style="left:453px;top:265px;width:90px;height:27px;line-height:27px;color:#2255a6;font-size:12px;text-align:center;"><span class="k">平</span>/<span class="k">半</span></div><div class="t" style="left:544px;top:266px;width:37px;height:27px;line-height:27px;color:#333;font-size:12px;text-align:center;">0.90</div><div class="t" style="left:582px;top:266px;width:67px;height:27px;line-height:27px;color:#333;font-size:12px;text-align:center;">2.14</div><div class="t" style="left:650px;top:266px;width:66px;height:27px;line-height:27px;color:#2255a6;font-size:12px;text-align:center;">3.47</div><div class="t" style="left:717px;top:266px;width:54px;height:27px;line-height:27px;color:#333;font-size:12px;text-align:center;">3.12</div><div class="t" style="left:772px;top:265px;width:38px;height:27px;line-height:27px;color:#008000;font-size:12px;text-align:center;"><span class="k">负</span></div><div class="t" style="left:811px;top:265px;width:38px;height:27px;line-height:27px;color:#008000;font-size:12px;text-align:center;"><span class="k">输</span></div><div class="t" style="left:850px;top:265px;width:55px;height:27px;line-height:27px;color:#ff0000;font-size:12px;text-align:center;"><span class="k">大</span></div><div style="left:0px;top:291px;width:905px;height:1px;background:#bfbfbf;"></div><div style="left:53px;top:264px;width:1px;height:27px;background:#bfbfbf;"></div><div style="left:127px;top:264px;width:1px;height:27px;background:#bfbfbf;"></div><div style="left:213px;top:264px;width:1px;height:27px;background:#bfbfbf;"></div><div style="left:301px;top:264px;width:1px;height:27px;background:#bfbfbf;"></div><div style="left:340px;top:264px;width:1px;height:27px;background:#bfbfbf;"></div><div style="left:414px;top:264px;width:1px;height:27px;background:#bfbfbf;"></div><div style="left:452px;top:264px;width:1px;height:27px;background:#bfbfbf;"></div><div style="left:543px;top:264px;width:1px;height:27px;background:#bfbfbf;"></div><div style="left:581px;top:264px;width:1px;height:27px;background:#bfbfbf;"></div><div style="left:649px;top:264px;width:1px;height:27px;background:#bfbfbf;"></div><div style="left:716px;top:264px;width:1px;height:27px;background:#bfbfbf;"></div><div style="left:771px;top:264px;width:1px;height:27px;background:#bfbfbf;"></div><div style="left:810px;top:264px;width:1px;height:27px;background:#bfbfbf;"></div><div style="left:849px;top:264px;width:1px;height:27px;background:#bfbfbf;"></div><div style="left:0px;top:292px;width:53px;height:27px;background:#e08b38;"></div><div style="left:54px;top:292px;width:73px;height:27px;background:#efefef;"></div><div style="left:128px;top:292px;width:85px;height:27px;background:#efefef;"></div><div style="left:214px;top:292px;width:87px;height:27px;background:#efefef;"></div><div style="left:302px;top:292px;width:38px;height:27px;background:#efefef;"></div><div style="left:341px;top:292px;width:73px;height:27px;background:#efefef;"></div><div style="left:415px;top:292px;width:37px;height:27px;background:#fdf9f6;"></div><div style="left:453px;top:292px;width:90px;height:27px;background:#fdf9f6;"></div><div style="left:544px;top:292px;width:37px;height:27px;background:#fdf9f6;"></div><div style="left:582px;top:292px;width:67px;height:27px;background:#f0f7fb;"></div><div style="left:650px;top:292px;width:66px;height:27px;background:#f0f7fb;"></div><div style="left:717px;top:292px;width:54px;height:27px;background:#f0f7fb;"></div><div style="left:772px;top:292px;width:38px;height:27px;background:#efefef;"></div><div style="left:811px;top:292px;width:38px;height:27px;background:#efefef;"></div><div style="left:850px;top:292px;width:55px;height:27px;background:#efefef;"></div><div class="t" style="left:-2px;top:293px;width:53px;height:27px;line-height:27px;color:#fff;font-size:12px;text-align:center;"><span class="k">挪威杯</span></div><div class="t" style="left:54px;top:294px;width:73px;height:27px;line-height:27px;color:#333;font-size:12px;text-align:center;">24-04-24</div><div class="t" style="left:128px;top:293px;width:85px;height:27px;line-height:27px;color:#1a1a1a;font-size:12px;text-align:center;"><span class="k">佛罗亚</span></div><div class="t" style="left:214px;top:294px;width:87px;height:27px;line-height:27px;color:#333;font-size:12px;text-align:center;"><span style="color:#ff0000">0-6</span><span style="color:#333">(0-2)</span></div><div class="t" style="left:302px;top:294px;width:38px;height:27px;line-height:27px;color:#333;font-size:12px;text-align:center;">2-9</div><div class="t" style="left:341px;top:293px;width:73px;height:27px;line-height:27px;color:#008000;font-size:12px;text-align:center;"><span class="k">特罗姆瑟</span></div><div class="t" style="left:415px;top:294px;width:37px;height:27px;line-height:27px;color:#333;font-size:12px;text-align:center;">0.96</div><div class="t" style="left:453px;top:293px;width:90px;height:27px;line-height:27px;color:#2255a6;font-size:12px;text-align:center;"><span style="color:#f00">*</span><span class="k">两球半</span>/<span class="k">三</span></div><div class="t" style="left:544px;top:294px;width:37px;height:27px;line-height:27px;color:#333;font-size:12px;text-align:center;">0.86</div><div class="t" style="left:582px;top:294px;width:67px;height:27px;line-height:27px;color:#333;font-size:12px;text-align:center;">18.54</div><div class="t" style="left:650px;top:294px;width:66px;height:27px;line-height:27px;color:#2255a6;font-size:12px;text-align:center;">10.96</div><div class="t" style="left:717px;top:294px;width:54px;height:27px;line-height:27px;color:#333;font-size:12px;text-align:center;">1.06</div><div class="t" style="left:772px;top:293px;width:38px;height:27px;line-height:27px;color:#ff0000;font-size:12px;text-align:center;"><span class="k">胜</span></div><div class="t" style="left:811px;top:293px;width:38px;height:27px;line-height:27px;color:#ff0000;font-size:12px;text-align:center;"><span class="k">赢</span></div><div class="t" style="left:850px;top:293px;width:55px;height:27px;line-height:27px;color:#ff0000;font-size:12px;text-align:center;"><span class="k">大</span></div><div style="left:0px;top:319px;width:905px;height:1px;background:#bfbfbf;"></div><div style="left:53px;top:292px;width:1px;height:27px;background:#bfbfbf;"></div><div style="left:127px;top:292px;width:1px;height:27px;background:#bfbfbf;"></div><div style="left:213px;top:292px;width:1px;height:27px;background:#bfbfbf;"></div><div style="left:301px;top:292px;width:1px;height:27px;background:#bfbfbf;"></div><div style="left:340px;top:292px;width:1px;height:27px;background:#bfbfbf;"></div><div style="left:414px;top:292px;width:1px;height:27px;background:#bfbfbf;"></div><div style="left:452px;top:292px;width:1px;height:27px;background:#bfbfbf;"></div><div style="left:543px;top:292px;width:1px;height:27px;background:#bfbfbf;"></div><div style="left:581px;top:292px;width:1px;height:27px;background:#bfbfbf;"></div><div style="left:649px;top:292px;width:1px;height:27px;background:#bfbfbf;"></div><div style="left:716px;top:292px;width:1px;height:27px;background:#bfbfbf;"></div><div style="left:771px;top:292px;width:1px;height:27px;background:#bfbfbf;"></div><div style="left:810px;top:292px;width:1px;height:27px;background:#bfbfbf;"></div><div style="left:849px;top:292px;width:1px;height:27px;background:#bfbfbf;"></div><div style="left:0px;top:320px;width:53px;height:27px;background:#666666;"></div><div style="left:54px;top:320px;width:73px;height:27px;background:#ffffff;"></div><div style="left:128px;top:320px;width:85px;height:27px;background:#ffffff;"></div><div style="left:214px;top:320px;width:87px;height:27px;background:#ffffff;"></div><div style="left:302px;top:320px;width:38px;height:27px;background:#ffffff;"></div><div style="left:341px;top:320px;width:73px;height:27px;background:#ffffff;"></div><div style="left:415px;top:320px;width:37px;height:27px;background:#fdf9f6;"></div><div style="left:453px;top:320px;width:90px;height:27px;background:#fdf9f6;"></div><div style="left:544px;top:320px;width:37px;height:27px;background:#fdf9f6;"></div><div style="left:582px;top:320px;width:67px;height:27px;background:#f0f7fb;"></div><div style="left:650px;top:320px;width:66px;height:27px;background:#f0f7fb;"></div><div style="left:717px;top:320px;width:54px;height:27px;background:#f0f7fb;"></div><div style="left:772px;top:320px;width:38px;height:27px;background:#ffffff;"></div><div style="left:811px;top:320px;width:38px;height:27px;background:#ffffff;"></div><div style="left:850px;top:320px;width:55px;height:27px;background:#ffffff;"></div><div class="t" style="left:-2px;top:321px;width:53px;height:27px;line-height:27px;color:#fff;font-size:12px;text-align:center;"><span class="k">挪超</span></div><div class="t" style="left:54px;top:322px;width:73px;height:27px;line-height:27px;color:#333;font-size:12px;text-align:center;">24-04-21</div><div class="t" style="left:128px;top:321px;width:85px;height:27px;line-height:27px;color:#1a1a1a;font-size:12px;text-align:center;"><span class="k">克里斯蒂</span></div><div class="t" style="left:214px;top:322px;width:87px;height:27px;line-height:27px;color:#333;font-size:12px;text-align:center;"><span style="color:#ff0000">1-0</span><span style="color:#333">(1-0)</span></div><div class="t" style="left:302px;top:322px;width:38px;height:27px;line-height:27px;color:#333;font-size:12px;text-align:center;">5-5</div><div class="t" style="left:341px;top:321px;width:73px;height:27px;line-height:27px;color:#008000;font-size:12px;text-align:center;"><span class="k">特罗姆瑟</span></div><div class="t" style="left:415px;top:322px;width:37px;height:27px;line-height:27px;color:#333;font-size:12px;text-align:center;">1.09</div><div class="t" style="left:453px;top:321px;width:90px;height:27px;line-height:27px;color:#2255a6;font-size:12px;text-align:center;"><span class="k">平手</span></div><div class="t" style="left:544px;top:322px;width:37px;height:27px;line-height:27px;color:#333;font-size:12px;text-align:center;">0.81</div><div class="t" style="left:582px;top:322px;width:67px;height:27px;line-height:27px;color:#333;font-size:12px;text-align:center;">2.63</div><div class="t" style="left:650px;top:322px;width:66px;height:27px;line-height:27px;color:#2255a6;font-size:12px;text-align:center;">3.28</div><div class="t" style="left:717px;top:322px;width:54px;height:27px;line-height:27px;color:#333;font-size:12px;text-align:center;">2.56</div><div class="t" style="left:772px;top:321px;width:38px;height:27px;line-height:27px;color:#008000;font-size:12px;text-align:center;"><span class="k">负</span></div><div class="t" style="left:811px;top:321px;width:38px;height:27px;line-height:27px;color:#008000;font-size:12px;text-align:center;"><span class="k">输</span></div><div class="t" style="left:850px;top:321px;width:55px;height:27px;line-height:27px;color:#008000;font-size:12px;text-align:center;"><span class="k">小</span></div><div style="left:0px;top:347px;width:905px;height:1px;background:#bfbfbf;"></div><div style="left:53px;top:320px;width:1px;height:27px;background:#bfbfbf;"></div><div style="left:127px;top:320px;width:1px;height:27px;background:#bfbfbf;"></div><div style="left:213px;top:320px;width:1px;height:27px;background:#bfbfbf;"></div><div style="left:301px;top:320px;width:1px;height:27px;background:#bfbfbf;"></div><div style="left:340px;top:320px;width:1px;height:27px;background:#bfbfbf;"></div><div style="left:414px;top:320px;width:1px;height:27px;background:#bfbfbf;"></div><div style="left:452px;top:320px;width:1px;height:27px;background:#bfbfbf;"></div><div style="left:543px;top:320px;width:1px;height:27px;background:#bfbfbf;"></div><div style="left:581px;top:320px;width:1px;height:27px;background:#bfbfbf;"></div><div style="left:649px;top:320px;width:1px;height:27px;background:#bfbfbf;"></div><div style="left:716px;top:320px;width:1px;height:27px;background:#bfbfbf;"></div><div style="left:771px;top:320px;width:1px;height:27px;background:#bfbfbf;"></div><div style="left:810px;top:320px;width:1px;height:27px;background:#bfbfbf;"></div><div style="left:849px;top:320px;width:1px;height:27px;background:#bfbfbf;"></div><div style="left:0px;top:348px;width:53px;height:27px;background:#666666;"></div><div style="left:54px;top:348px;width:73px;height:27px;background:#efefef;"></div><div style="left:128px;top:348px;width:85px;height:27px;background:#efefef;"></div><div style="left:214px;top:348px;width:87px;height:27px;background:#efefef;"></div><div style="left:302px;top:348px;width:38px;height:27px;background:#efefef;"></div><div style="left:341px;top:348px;width:73px;height:27px;background:#efefef;"></div><div style="left:415px;top:348px;width:37px;height:27px;background:#fdf9f6;"></div><div style="left:453px;top:348px;width:90px;height:27px;background:#fdf9f6;"></div><div style="left:544px;top:348px;width:37px;height:27px;background:#fdf9f6;"></div><div style="left:582px;top:348px;width:67px;height:27px;background:#f0f7fb;"></div><div style="left:650px;top:348px;width:66px;height:27px;background:#f0f7fb;"></div><div style="left:717px;top:348px;width:54px;height:27px;background:#f0f7fb;"></div><div style="left:772px;top:348px;width:38px;height:27px;background:#efefef;"></div><div style="left:811px;top:348px;width:38px;height:27px;background:#efefef;"></div><div style="left:850px;top:348px;width:55px;height:27px;background:#efefef;"></div><div class="t" style="left:-2px;top:349px;width:53px;height:27px;line-height:27px;color:#fff;font-size:12px;text-align:center;"><span class="k">挪超</span></div><div class="t" style="left:54px;top:350px;width:73px;height:27px;line-height:27px;color:#333;font-size:12px;text-align:center;">24-04-14</div><div class="t" style="left:128px;top:349px;width:85px;height:27px;line-height:27px;color:#008000;font-size:12px;text-align:center;"><span class="k">特罗姆瑟</span></div><div class="t" style="left:214px;top:350px;width:87px;height:27px;line-height:27px;color:#333;font-size:12px;text-align:center;"><span style="color:#ff0000">0-1</span><span style="color:#333">(0-1)</span></div><div class="t" style="left:302px;top:350px;width:38px;height:27px;line-height:27px;color:#333;font-size:12px;text-align:center;">6-3</div><div class="t" style="left:341px;top:349px;width:73px;height:27px;line-height:27px;color:#1a1a1a;font-size:12px;text-align:center;"><span class="k">海于格松</span></div><div class="t" style="left:415px;top:350px;width:37px;height:27px;line-height:27px;color:#333;font-size:12px;text-align:center;">1.05</div><div class="t" style="left:453px;top:349px;width:90px;height:27px;line-height:27px;color:#2255a6;font-size:12px;text-align:center;"><span class="k">一球</span></div><div class="t" style="left:544px;top:350px;width:37px;height:27px;line-height:27px;color:#333;font-size:12px;text-align:center;">0.85</div><div class="t" style="left:582px;top:350px;width:67px;height:27px;line-height:27px;color:#333;font-size:12px;text-align:center;">1.57</div><div class="t" style="left:650px;top:350px;width:66px;height:27px;line-height:27px;color:#2255a6;font-size:12px;text-align:center;">4.01</div><div class="t" style="left:717px;top:350px;width:54px;height:27px;line-height:27px;color:#333;font-size:12px;text-align:center;">5.18</div><div class="t" style="left:772px;top:349px;width:38px;height:27px;line-height:27px;color:#008000;font-size:12px;text-align:center;"><span class="k">负</span></div><div class="t" style="left:811px;top:349px;width:38px;height:27px;line-height:27px;color:#008000;font-size:12px;text-align:center;"><span class="k">输</span></div><div class="t" style="left:850px;top:349px;width:55px;height:27px;line-height:27px;color:#008000;font-size:12px;text-align:center;"><span class="k">小</span></div><div style="left:0px;top:375px;width:905px;height:1px;background:#bfbfbf;"></div><div style="left:53px;top:348px;width:1px;height:27px;background:#bfbfbf;"></div><div style="left:127px;top:348px;width:1px;height:27px;background:#bfbfbf;"></div><div style="left:213px;top:348px;width:1px;height:27px;background:#bfbfbf;"></div><div style="left:301px;top:348px;width:1px;height:27px;background:#bfbfbf;"></div><div style="left:340px;top:348px;width:1px;height:27px;background:#bfbfbf;"></div><div style="left:414px;top:348px;width:1px;height:27px;background:#bfbfbf;"></div><div style="left:452px;top:348px;width:1px;height:27px;background:#bfbfbf;"></div><div style="left:543px;top:348px;width:1px;height:27px;background:#bfbfbf;"></div><div style="left:581px;top:348px;width:1px;height:27px;background:#bfbfbf;"></div><div style="left:649px;top:348px;width:1px;height:27px;background:#bfbfbf;"></div><div style="left:716px;top:348px;width:1px;height:27px;background:#bfbfbf;"></div><div style="left:771px;top:348px;width:1px;height:27px;background:#bfbfbf;"></div><div style="left:810px;top:348px;width:1px;height:27px;background:#bfbfbf;"></div><div style="left:849px;top:348px;width:1px;height:27px;background:#bfbfbf;"></div><div style="left:0px;top:376px;width:905px;height:27px;background:#fff;"></div><div class="t sum" style="left:289px;top:381px;height:18px;line-height:18px;font-size:12px"><span class="k">近</span><span style="color:#ff0000">10</span><span class="k">场</span>,<span class="k">胜</span>3<span class="k">平</span>2<span class="k">负</span>5, <span class="k">胜率</span>:</div><div class="t" style="left:421px;top:380px;width:35px;height:18px;line-height:18px;background:#008000;color:#fff;font-size:13px;text-align:center">30%</div><div class="t sum" style="left:459px;top:381px;height:18px;line-height:18px;font-size:12px"><span class="k">赢率</span>:</div><div class="t sum" style="left:487px;top:381px;height:18px;line-height:18px;font-size:12px"><span style="color:#0000ff">60%</span></div><div class="t sum" style="left:515px;top:381px;height:18px;line-height:18px;font-size:12px"><span class="k">大</span>:</div><div class="t sum" style="left:532px;top:381px;height:18px;line-height:18px;font-size:12px"><span style="color:#0000ff">50%</span></div><div class="t sum" style="left:561px;top:381px;height:18px;line-height:18px;font-size:12px"><span class="k">单率</span>:</div><div class="t sum" style="left:589px;top:381px;height:18px;line-height:18px;font-size:12px"><span style="color:#0000ff">50%</span></div><div style="left:0px;top:403px;width:905px;height:1px;background:#bfbfbf;"></div><div style="left:0px;top:404px;width:905px;height:66px;background:#dde4ed;"></div><div class="t" style="left:17px;top:406px;width:200px;height:25px;line-height:25px;color:#2b5aa8;font-size:13px;text-align:left;font-weight:bold">费德列斯达</div><div class="t" style="left:313px;top:407px;height:25px;line-height:25px;font-size:13px;color:#1a1a1a"><span class="k">近</span></div><div class="sel" style="left:329px;top:411px;width:34px;height:14px;"><span style="position:absolute;left:5px;top:0;line-height:14px;font-size:11px;white-space:nowrap">10</span><svg width="10" height="7" viewBox="0 0 10 7" style="position:absolute;right:4px;top:3px"><path d="M1 1.2 L5 5.2 L9 1.2" fill="none" stroke="#000" stroke-width="2"/></svg></div><div class="t" style="left:369px;top:407px;height:25px;line-height:25px;font-size:13px;color:#1a1a1a"><span class="k">场</span></div><div class="cb" style="left:385px;top:413px"></div><div class="t" style="left:402px;top:407px;height:25px;line-height:25px;font-size:12px;color:#1a1a1a"><span class="k">同客</span></div><div class="cb on" style="left:430px;top:413px"><svg width="13" height="13" viewBox="0 0 13 13" style="position:absolute;left:0;top:0"><path d="M2.4 6.3 L5.9 9.6 L10.8 2.6" fill="none" stroke="#fff" stroke-width="2.1"/></svg></div><div class="t" style="left:443px;top:407px;height:25px;line-height:25px;font-size:12px;color:#1a1a1a"><span class="k">挪超</span></div><div class="cb on" style="left:467px;top:413px"><svg width="13" height="13" viewBox="0 0 13 13" style="position:absolute;left:0;top:0"><path d="M2.4 6.3 L5.9 9.6 L10.8 2.6" fill="none" stroke="#fff" stroke-width="2.1"/></svg></div><div class="t" style="left:480px;top:407px;height:25px;line-height:25px;font-size:12px;color:#1a1a1a"><span class="k">挪威杯</span></div><div class="cb on" style="left:516px;top:413px"><svg width="13" height="13" viewBox="0 0 13 13" style="position:absolute;left:0;top:0"><path d="M2.4 6.3 L5.9 9.6 L10.8 2.6" fill="none" stroke="#fff" stroke-width="2.1"/></svg></div><div class="t" style="left:529px;top:407px;height:25px;line-height:25px;font-size:12px;color:#1a1a1a"><span class="k">球会友谊</span></div><div class="cb on" style="left:577px;top:413px"><svg width="13" height="13" viewBox="0 0 13 13" style="position:absolute;left:0;top:0"><path d="M2.4 6.3 L5.9 9.6 L10.8 2.6" fill="none" stroke="#fff" stroke-width="2.1"/></svg></div><div class="t" style="left:590px;top:407px;height:25px;line-height:25px;font-size:12px;color:#1a1a1a"><span class="k">大西洋杯</span></div><div class="cb on" style="left:638px;top:413px"><svg width="13" height="13" viewBox="0 0 13 13" style="position:absolute;left:0;top:0"><path d="M2.4 6.3 L5.9 9.6 L10.8 2.6" fill="none" stroke="#fff" stroke-width="2.1"/></svg></div><div class="t" style="left:651px;top:407px;height:25px;line-height:25px;font-size:12px;color:#1a1a1a"><span class="k">挪甲</span></div><div style="left:0px;top:429px;width:905px;height:1px;background:#bfbfbf;"></div><div style="left:420px;top:452px;width:485px;height:1px;background:#bfbfbf;"></div><div style="left:0px;top:470px;width:905px;height:1px;background:#bfbfbf;"></div><div style="left:54px;top:429px;width:1px;height:41px;background:#bfbfbf;"></div><div style="left:129px;top:429px;width:1px;height:41px;background:#bfbfbf;"></div><div style="left:216px;top:429px;width:1px;height:41px;background:#bfbfbf;"></div><div style="left:305px;top:429px;width:1px;height:41px;background:#bfbfbf;"></div><div style="left:344px;top:429px;width:1px;height:41px;background:#bfbfbf;"></div><div style="left:420px;top:429px;width:1px;height:41px;background:#bfbfbf;"></div><div style="left:576px;top:429px;width:1px;height:41px;background:#bfbfbf;"></div><div style="left:769px;top:429px;width:1px;height:41px;background:#bfbfbf;"></div><div style="left:460px;top:452px;width:1px;height:18px;background:#bfbfbf;"></div><div style="left:536px;top:452px;width:1px;height:18px;background:#bfbfbf;"></div><div style="left:640px;top:452px;width:1px;height:18px;background:#bfbfbf;"></div><div style="left:705px;top:452px;width:1px;height:18px;background:#bfbfbf;"></div><div style="left:808px;top:452px;width:1px;height:18px;background:#bfbfbf;"></div><div style="left:848px;top:452px;width:1px;height:18px;background:#bfbfbf;"></div><div class="t" style="left:-2px;top:431px;width:54px;height:40px;line-height:40px;color:#1a1a1a;font-size:12px;text-align:center;"><span class="k">类型</span></div><div class="t" style="left:55px;top:431px;width:74px;height:40px;line-height:40px;color:#1a1a1a;font-size:12px;text-align:center;"><span class="k">日期</span></div><div class="t" style="left:130px;top:431px;width:86px;height:40px;line-height:40px;color:#1a1a1a;font-size:12px;text-align:center;"><span class="k">主场</span></div><div class="t" style="left:217px;top:431px;width:88px;height:40px;line-height:40px;color:#1a1a1a;font-size:12px;text-align:center;"><span class="k">比分</span>(<span class="k">半场</span>)</div><div class="t" style="left:306px;top:431px;width:38px;height:40px;line-height:40px;color:#1a1a1a;font-size:12px;text-align:center;"><span class="k">角球</span></div><div class="t" style="left:345px;top:431px;width:75px;height:40px;line-height:40px;color:#1a1a1a;font-size:12px;text-align:center;"><span class="k">客场</span></div><div class="t" style="left:421px;top:454px;width:39px;height:17px;line-height:17px;color:#1a1a1a;font-size:12px;text-align:center;"><span class="k">主</span></div><div class="t" style="left:461px;top:454px;width:75px;height:17px;line-height:17px;color:#1a1a1a;font-size:12px;text-align:center;"><span class="k">盘口</span></div><div class="t" style="left:537px;top:454px;width:39px;height:17px;line-height:17px;color:#1a1a1a;font-size:12px;text-align:center;"><span class="k">客</span></div><div class="t" style="left:577px;top:454px;width:63px;height:17px;line-height:17px;color:#1a1a1a;font-size:12px;text-align:center;"><span class="k">主</span></div><div class="t" style="left:641px;top:454px;width:64px;height:17px;line-height:17px;color:#1a1a1a;font-size:12px;text-align:center;"><span class="k">和</span></div><div class="t" style="left:706px;top:454px;width:63px;height:17px;line-height:17px;color:#1a1a1a;font-size:12px;text-align:center;"><span class="k">客</span></div><div class="t" style="left:770px;top:454px;width:38px;height:17px;line-height:17px;color:#1a1a1a;font-size:12px;text-align:center;"><span class="k">胜负</span></div><div class="t" style="left:809px;top:454px;width:39px;height:17px;line-height:17px;color:#1a1a1a;font-size:12px;text-align:center;"><span class="k">让球</span></div><div class="t" style="left:849px;top:454px;width:56px;height:17px;line-height:17px;color:#1a1a1a;font-size:12px;text-align:center;"><span class="k">进球数</span></div><div class="sel" style="left:447px;top:431px;width:58px;height:18px;"><span style="position:absolute;left:4px;top:0;line-height:18px;font-size:13px;white-space:nowrap">Crow*</span><svg width="10" height="7" viewBox="0 0 10 7" style="position:absolute;right:4px;top:5px"><path d="M1 1.2 L5 5.2 L9 1.2" fill="none" stroke="#000" stroke-width="2"/></svg></div><div class="sel" style="left:514px;top:431px;width:34px;height:18px;"><span style="position:absolute;left:4px;top:0;line-height:18px;font-size:12px;white-space:nowrap">终</span><svg width="10" height="7" viewBox="0 0 10 7" style="position:absolute;right:4px;top:5px"><path d="M1 1.2 L5 5.2 L9 1.2" fill="none" stroke="#000" stroke-width="2"/></svg></div><div class="sel" style="left:609px;top:431px;width:82px;height:18px;"><span style="position:absolute;left:4px;top:0;line-height:18px;font-size:12px;white-space:nowrap">胜平负均值</span><svg width="10" height="7" viewBox="0 0 10 7" style="position:absolute;right:4px;top:5px"><path d="M1 1.2 L5 5.2 L9 1.2" fill="none" stroke="#000" stroke-width="2"/></svg></div><div class="sel" style="left:701px;top:431px;width:34px;height:18px;"><span style="position:absolute;left:4px;top:0;line-height:18px;font-size:12px;white-space:nowrap">终</span><svg width="10" height="7" viewBox="0 0 10 7" style="position:absolute;right:4px;top:5px"><path d="M1 1.2 L5 5.2 L9 1.2" fill="none" stroke="#000" stroke-width="2"/></svg></div><div class="sel" style="left:814px;top:431px;width:46px;height:18px;"><span style="position:absolute;left:4px;top:0;line-height:18px;font-size:12px;white-space:nowrap">全场</span><svg width="10" height="7" viewBox="0 0 10 7" style="position:absolute;right:4px;top:5px"><path d="M1 1.2 L5 5.2 L9 1.2" fill="none" stroke="#000" stroke-width="2"/></svg></div><div style="left:0px;top:471px;width:54px;height:27px;background:#666666;"></div><div style="left:55px;top:471px;width:74px;height:27px;background:#ffffff;"></div><div style="left:130px;top:471px;width:86px;height:27px;background:#ffffff;"></div><div style="left:217px;top:471px;width:88px;height:27px;background:#ffffff;"></div><div style="left:306px;top:471px;width:38px;height:27px;background:#ffffff;"></div><div style="left:345px;top:471px;width:75px;height:27px;background:#ffffff;"></div><div style="left:421px;top:471px;width:39px;height:27px;background:#fdf9f6;"></div><div style="left:461px;top:471px;width:75px;height:27px;background:#fdf9f6;"></div><div style="left:537px;top:471px;width:39px;height:27px;background:#fdf9f6;"></div><div style="left:577px;top:471px;width:63px;height:27px;background:#f0f7fb;"></div><div style="left:641px;top:471px;width:64px;height:27px;background:#f0f7fb;"></div><div style="left:706px;top:471px;width:63px;height:27px;background:#f0f7fb;"></div><div style="left:770px;top:471px;width:38px;height:27px;background:#ffffff;"></div><div style="left:809px;top:471px;width:39px;height:27px;background:#ffffff;"></div><div style="left:849px;top:471px;width:56px;height:27px;background:#ffffff;"></div><div class="t" style="left:-2px;top:472px;width:54px;height:27px;line-height:27px;color:#fff;font-size:12px;text-align:center;"><span class="k">挪超</span></div><div class="t" style="left:55px;top:473px;width:74px;height:27px;line-height:27px;color:#333;font-size:12px;text-align:center;">24-05-25</div><div class="t" style="left:130px;top:472px;width:86px;height:27px;line-height:27px;color:#008000;font-size:12px;text-align:center;"><span class="badge">1</span><span class="k">费德列斯</span></div><div class="t" style="left:217px;top:473px;width:88px;height:27px;line-height:27px;color:#333;font-size:12px;text-align:center;"><span style="color:#ff0000">0-0</span><span style="color:#333">(0-0)</span></div><div class="t" style="left:306px;top:473px;width:38px;height:27px;line-height:27px;color:#333;font-size:12px;text-align:center;">3-5</div><div class="t" style="left:345px;top:472px;width:75px;height:27px;line-height:27px;color:#1a1a1a;font-size:12px;text-align:center;"><span class="k">特罗姆瑟</span></div><div class="t" style="left:421px;top:473px;width:39px;height:27px;line-height:27px;color:#333;font-size:12px;text-align:center;">0.95</div><div class="t" style="left:461px;top:472px;width:75px;height:27px;line-height:27px;color:#2255a6;font-size:12px;text-align:center;"><span class="k">半球</span></div><div class="t" style="left:537px;top:473px;width:39px;height:27px;line-height:27px;color:#333;font-size:12px;text-align:center;">0.93</div><div class="t" style="left:577px;top:473px;width:63px;height:27px;line-height:27px;color:#333;font-size:12px;text-align:center;">1.87</div><div class="t" style="left:641px;top:473px;width:64px;height:27px;line-height:27px;color:#2255a6;font-size:12px;text-align:center;">3.45</div><div class="t" style="left:706px;top:473px;width:63px;height:27px;line-height:27px;color:#333;font-size:12px;text-align:center;">3.99</div><div class="t" style="left:770px;top:472px;width:38px;height:27px;line-height:27px;color:#0000ff;font-size:12px;text-align:center;"><span class="k">平</span></div><div class="t" style="left:809px;top:472px;width:39px;height:27px;line-height:27px;color:#008000;font-size:12px;text-align:center;"><span class="k">输</span></div><div class="t" style="left:849px;top:472px;width:56px;height:27px;line-height:27px;color:#008000;font-size:12px;text-align:center;"><span class="k">小</span></div><div style="left:0px;top:498px;width:905px;height:1px;background:#bfbfbf;"></div><div style="left:54px;top:471px;width:1px;height:27px;background:#bfbfbf;"></div><div style="left:129px;top:471px;width:1px;height:27px;background:#bfbfbf;"></div><div style="left:216px;top:471px;width:1px;height:27px;background:#bfbfbf;"></div><div style="left:305px;top:471px;width:1px;height:27px;background:#bfbfbf;"></div><div style="left:344px;top:471px;width:1px;height:27px;background:#bfbfbf;"></div><div style="left:420px;top:471px;width:1px;height:27px;background:#bfbfbf;"></div><div style="left:460px;top:471px;width:1px;height:27px;background:#bfbfbf;"></div><div style="left:536px;top:471px;width:1px;height:27px;background:#bfbfbf;"></div><div style="left:576px;top:471px;width:1px;height:27px;background:#bfbfbf;"></div><div style="left:640px;top:471px;width:1px;height:27px;background:#bfbfbf;"></div><div style="left:705px;top:471px;width:1px;height:27px;background:#bfbfbf;"></div><div style="left:769px;top:471px;width:1px;height:27px;background:#bfbfbf;"></div><div style="left:808px;top:471px;width:1px;height:27px;background:#bfbfbf;"></div><div style="left:848px;top:471px;width:1px;height:27px;background:#bfbfbf;"></div><div style="left:0px;top:499px;width:54px;height:27px;background:#666666;"></div><div style="left:55px;top:499px;width:74px;height:27px;background:#efefef;"></div><div style="left:130px;top:499px;width:86px;height:27px;background:#efefef;"></div><div style="left:217px;top:499px;width:88px;height:27px;background:#efefef;"></div><div style="left:306px;top:499px;width:38px;height:27px;background:#efefef;"></div><div style="left:345px;top:499px;width:75px;height:27px;background:#efefef;"></div><div style="left:421px;top:499px;width:39px;height:27px;background:#fdf9f6;"></div><div style="left:461px;top:499px;width:75px;height:27px;background:#fdf9f6;"></div><div style="left:537px;top:499px;width:39px;height:27px;background:#fdf9f6;"></div><div style="left:577px;top:499px;width:63px;height:27px;background:#f0f7fb;"></div><div style="left:641px;top:499px;width:64px;height:27px;background:#f0f7fb;"></div><div style="left:706px;top:499px;width:63px;height:27px;background:#f0f7fb;"></div><div style="left:770px;top:499px;width:38px;height:27px;background:#efefef;"></div><div style="left:809px;top:499px;width:39px;height:27px;background:#efefef;"></div><div style="left:849px;top:499px;width:56px;height:27px;background:#efefef;"></div><div class="t" style="left:-2px;top:500px;width:54px;height:27px;line-height:27px;color:#fff;font-size:12px;text-align:center;"><span class="k">挪超</span></div><div class="t" style="left:55px;top:501px;width:74px;height:27px;line-height:27px;color:#333;font-size:12px;text-align:center;">24-05-20</div><div class="t" style="left:130px;top:500px;width:86px;height:27px;line-height:27px;color:#1a1a1a;font-size:12px;text-align:center;"><span class="k">利勒斯特</span></div><div class="t" style="left:217px;top:501px;width:88px;height:27px;line-height:27px;color:#333;font-size:12px;text-align:center;"><span style="color:#ff0000">0-3</span><span style="color:#333">(0-1)</span></div><div class="t" style="left:306px;top:501px;width:38px;height:27px;line-height:27px;color:#333;font-size:12px;text-align:center;">3-8</div><div class="t" style="left:345px;top:500px;width:75px;height:27px;line-height:27px;color:#008000;font-size:12px;text-align:center;"><span class="k">费德列斯</span></div><div class="t" style="left:421px;top:501px;width:39px;height:27px;line-height:27px;color:#333;font-size:12px;text-align:center;">0.98</div><div class="t" style="left:461px;top:500px;width:75px;height:27px;line-height:27px;color:#2255a6;font-size:12px;text-align:center;"><span class="k">半球</span></div><div class="t" style="left:537px;top:501px;width:39px;height:27px;line-height:27px;color:#333;font-size:12px;text-align:center;">0.90</div><div class="t" style="left:577px;top:501px;width:63px;height:27px;line-height:27px;color:#333;font-size:12px;text-align:center;">2.07</div><div class="t" style="left:641px;top:501px;width:64px;height:27px;line-height:27px;color:#2255a6;font-size:12px;text-align:center;">3.39</div><div class="t" style="left:706px;top:501px;width:63px;height:27px;line-height:27px;color:#333;font-size:12px;text-align:center;">3.38</div><div class="t" style="left:770px;top:500px;width:38px;height:27px;line-height:27px;color:#ff0000;font-size:12px;text-align:center;"><span class="k">胜</span></div><div class="t" style="left:809px;top:500px;width:39px;height:27px;line-height:27px;color:#ff0000;font-size:12px;text-align:center;"><span class="k">赢</span></div><div class="t" style="left:849px;top:500px;width:56px;height:27px;line-height:27px;color:#ff0000;font-size:12px;text-align:center;"><span class="k">大</span></div><div style="left:0px;top:526px;width:905px;height:1px;background:#bfbfbf;"></div><div style="left:54px;top:499px;width:1px;height:27px;background:#bfbfbf;"></div><div style="left:129px;top:499px;width:1px;height:27px;background:#bfbfbf;"></div><div style="left:216px;top:499px;width:1px;height:27px;background:#bfbfbf;"></div><div style="left:305px;top:499px;width:1px;height:27px;background:#bfbfbf;"></div><div style="left:344px;top:499px;width:1px;height:27px;background:#bfbfbf;"></div><div style="left:420px;top:499px;width:1px;height:27px;background:#bfbfbf;"></div><div style="left:460px;top:499px;width:1px;height:27px;background:#bfbfbf;"></div><div style="left:536px;top:499px;width:1px;height:27px;background:#bfbfbf;"></div><div style="left:576px;top:499px;width:1px;height:27px;background:#bfbfbf;"></div><div style="left:640px;top:499px;width:1px;height:27px;background:#bfbfbf;"></div><div style="left:705px;top:499px;width:1px;height:27px;background:#bfbfbf;"></div><div style="left:769px;top:499px;width:1px;height:27px;background:#bfbfbf;"></div><div style="left:808px;top:499px;width:1px;height:27px;background:#bfbfbf;"></div><div style="left:848px;top:499px;width:1px;height:27px;background:#bfbfbf;"></div><div style="left:0px;top:527px;width:54px;height:27px;background:#666666;"></div><div style="left:55px;top:527px;width:74px;height:27px;background:#ffffff;"></div><div style="left:130px;top:527px;width:86px;height:27px;background:#ffffff;"></div><div style="left:217px;top:527px;width:88px;height:27px;background:#ffffff;"></div><div style="left:306px;top:527px;width:38px;height:27px;background:#ffffff;"></div><div style="left:345px;top:527px;width:75px;height:27px;background:#ffffff;"></div><div style="left:421px;top:527px;width:39px;height:27px;background:#fdf9f6;"></div><div style="left:461px;top:527px;width:75px;height:27px;background:#fdf9f6;"></div><div style="left:537px;top:527px;width:39px;height:27px;background:#fdf9f6;"></div><div style="left:577px;top:527px;width:63px;height:27px;background:#f0f7fb;"></div><div style="left:641px;top:527px;width:64px;height:27px;background:#f0f7fb;"></div><div style="left:706px;top:527px;width:63px;height:27px;background:#f0f7fb;"></div><div style="left:770px;top:527px;width:38px;height:27px;background:#ffffff;"></div><div style="left:809px;top:527px;width:39px;height:27px;background:#ffffff;"></div><div style="left:849px;top:527px;width:56px;height:27px;background:#ffffff;"></div><div class="t" style="left:-2px;top:528px;width:54px;height:27px;line-height:27px;color:#fff;font-size:12px;text-align:center;"><span class="k">挪超</span></div><div class="t" style="left:55px;top:529px;width:74px;height:27px;line-height:27px;color:#333;font-size:12px;text-align:center;">24-05-16</div><div class="t" style="left:130px;top:528px;width:86px;height:27px;line-height:27px;color:#008000;font-size:12px;text-align:center;"><span class="k">费德列斯</span></div><div class="t" style="left:217px;top:529px;width:88px;height:27px;line-height:27px;color:#333;font-size:12px;text-align:center;"><span style="color:#ff0000">4-1</span><span style="color:#333">(3-1)</span></div><div class="t" style="left:306px;top:529px;width:38px;height:27px;line-height:27px;color:#333;font-size:12px;text-align:center;">8-2</div><div class="t" style="left:345px;top:528px;width:75px;height:27px;line-height:27px;color:#1a1a1a;font-size:12px;text-align:center;"><span class="k">斯托姆加</span></div><div class="t" style="left:421px;top:529px;width:39px;height:27px;line-height:27px;color:#333;font-size:12px;text-align:center;">0.98</div><div class="t" style="left:461px;top:528px;width:75px;height:27px;line-height:27px;color:#2255a6;font-size:12px;text-align:center;"><span class="k">平</span>/<span class="k">半</span></div><div class="t" style="left:537px;top:529px;width:39px;height:27px;line-height:27px;color:#333;font-size:12px;text-align:center;">0.90</div><div class="t" style="left:577px;top:529px;width:63px;height:27px;line-height:27px;color:#333;font-size:12px;text-align:center;">2.19</div><div class="t" style="left:641px;top:529px;width:64px;height:27px;line-height:27px;color:#2255a6;font-size:12px;text-align:center;">3.21</div><div class="t" style="left:706px;top:529px;width:63px;height:27px;line-height:27px;color:#333;font-size:12px;text-align:center;">3.26</div><div class="t" style="left:770px;top:528px;width:38px;height:27px;line-height:27px;color:#ff0000;font-size:12px;text-align:center;"><span class="k">胜</span></div><div class="t" style="left:809px;top:528px;width:39px;height:27px;line-height:27px;color:#ff0000;font-size:12px;text-align:center;"><span class="k">赢</span></div><div class="t" style="left:849px;top:528px;width:56px;height:27px;line-height:27px;color:#ff0000;font-size:12px;text-align:center;"><span class="k">大</span></div><div style="left:0px;top:554px;width:905px;height:1px;background:#bfbfbf;"></div><div style="left:54px;top:527px;width:1px;height:27px;background:#bfbfbf;"></div><div style="left:129px;top:527px;width:1px;height:27px;background:#bfbfbf;"></div><div style="left:216px;top:527px;width:1px;height:27px;background:#bfbfbf;"></div><div style="left:305px;top:527px;width:1px;height:27px;background:#bfbfbf;"></div><div style="left:344px;top:527px;width:1px;height:27px;background:#bfbfbf;"></div><div style="left:420px;top:527px;width:1px;height:27px;background:#bfbfbf;"></div><div style="left:460px;top:527px;width:1px;height:27px;background:#bfbfbf;"></div><div style="left:536px;top:527px;width:1px;height:27px;background:#bfbfbf;"></div><div style="left:576px;top:527px;width:1px;height:27px;background:#bfbfbf;"></div><div style="left:640px;top:527px;width:1px;height:27px;background:#bfbfbf;"></div><div style="left:705px;top:527px;width:1px;height:27px;background:#bfbfbf;"></div><div style="left:769px;top:527px;width:1px;height:27px;background:#bfbfbf;"></div><div style="left:808px;top:527px;width:1px;height:27px;background:#bfbfbf;"></div><div style="left:848px;top:527px;width:1px;height:27px;background:#bfbfbf;"></div><div style="left:0px;top:555px;width:54px;height:27px;background:#666666;"></div><div style="left:55px;top:555px;width:74px;height:27px;background:#efefef;"></div><div style="left:130px;top:555px;width:86px;height:27px;background:#efefef;"></div><div style="left:217px;top:555px;width:88px;height:27px;background:#efefef;"></div><div style="left:306px;top:555px;width:38px;height:27px;background:#efefef;"></div><div style="left:345px;top:555px;width:75px;height:27px;background:#efefef;"></div><div style="left:421px;top:555px;width:39px;height:27px;background:#fdf9f6;"></div><div style="left:461px;top:555px;width:75px;height:27px;background:#fdf9f6;"></div><div style="left:537px;top:555px;width:39px;height:27px;background:#fdf9f6;"></div><div style="left:577px;top:555px;width:63px;height:27px;background:#f0f7fb;"></div><div style="left:641px;top:555px;width:64px;height:27px;background:#f0f7fb;"></div><div style="left:706px;top:555px;width:63px;height:27px;background:#f0f7fb;"></div><div style="left:770px;top:555px;width:38px;height:27px;background:#efefef;"></div><div style="left:809px;top:555px;width:39px;height:27px;background:#efefef;"></div><div style="left:849px;top:555px;width:56px;height:27px;background:#efefef;"></div><div class="t" style="left:-2px;top:556px;width:54px;height:27px;line-height:27px;color:#fff;font-size:12px;text-align:center;"><span class="k">挪超</span></div><div class="t" style="left:55px;top:557px;width:74px;height:27px;line-height:27px;color:#333;font-size:12px;text-align:center;">24-05-12</div><div class="t" style="left:130px;top:557px;width:86px;height:27px;line-height:27px;color:#333;font-size:12px;text-align:center;">KFUM</div><div class="t" style="left:217px;top:557px;width:88px;height:27px;line-height:27px;color:#333;font-size:12px;text-align:center;"><span style="color:#ff0000">1-4</span><span style="color:#333">(0-4)</span></div><div class="t" style="left:306px;top:557px;width:38px;height:27px;line-height:27px;color:#333;font-size:12px;text-align:center;">6-3</div><div class="t" style="left:345px;top:556px;width:75px;height:27px;line-height:27px;color:#008000;font-size:12px;text-align:center;"><span class="k">费德列斯</span></div><div class="t" style="left:421px;top:557px;width:39px;height:27px;line-height:27px;color:#333;font-size:12px;text-align:center;">1.05</div><div class="t" style="left:461px;top:556px;width:75px;height:27px;line-height:27px;color:#2255a6;font-size:12px;text-align:center;"><span class="k">平手</span></div><div class="t" style="left:537px;top:557px;width:39px;height:27px;line-height:27px;color:#333;font-size:12px;text-align:center;">0.83</div><div class="t" style="left:577px;top:557px;width:63px;height:27px;line-height:27px;color:#333;font-size:12px;text-align:center;">2.75</div><div class="t" style="left:641px;top:557px;width:64px;height:27px;line-height:27px;color:#2255a6;font-size:12px;text-align:center;">3.11</div><div class="t" style="left:706px;top:557px;width:63px;height:27px;line-height:27px;color:#333;font-size:12px;text-align:center;">2.56</div><div class="t" style="left:770px;top:556px;width:38px;height:27px;line-height:27px;color:#ff0000;font-size:12px;text-align:center;"><span class="k">胜</span></div><div class="t" style="left:809px;top:556px;width:39px;height:27px;line-height:27px;color:#ff0000;font-size:12px;text-align:center;"><span class="k">赢</span></div><div class="t" style="left:849px;top:556px;width:56px;height:27px;line-height:27px;color:#ff0000;font-size:12px;text-align:center;"><span class="k">大</span></div><div style="left:0px;top:582px;width:905px;height:1px;background:#bfbfbf;"></div><div style="left:54px;top:555px;width:1px;height:27px;background:#bfbfbf;"></div><div style="left:129px;top:555px;width:1px;height:27px;background:#bfbfbf;"></div><div style="left:216px;top:555px;width:1px;height:27px;background:#bfbfbf;"></div><div style="left:305px;top:555px;width:1px;height:27px;background:#bfbfbf;"></div><div style="left:344px;top:555px;width:1px;height:27px;background:#bfbfbf;"></div><div style="left:420px;top:555px;width:1px;height:27px;background:#bfbfbf;"></div><div style="left:460px;top:555px;width:1px;height:27px;background:#bfbfbf;"></div><div style="left:536px;top:555px;width:1px;height:27px;background:#bfbfbf;"></div><div style="left:576px;top:555px;width:1px;height:27px;background:#bfbfbf;"></div><div style="left:640px;top:555px;width:1px;height:27px;background:#bfbfbf;"></div><div style="left:705px;top:555px;width:1px;height:27px;background:#bfbfbf;"></div><div style="left:769px;top:555px;width:1px;height:27px;background:#bfbfbf;"></div><div style="left:808px;top:555px;width:1px;height:27px;background:#bfbfbf;"></div><div style="left:848px;top:555px;width:1px;height:27px;background:#bfbfbf;"></div><div style="left:0px;top:583px;width:54px;height:27px;background:#e08b38;"></div><div style="left:55px;top:583px;width:74px;height:27px;background:#ffffff;"></div><div style="left:130px;top:583px;width:86px;height:27px;background:#ffffff;"></div><div style="left:217px;top:583px;width:88px;height:27px;background:#ffffff;"></div><div style="left:306px;top:583px;width:38px;height:27px;background:#ffffff;"></div><div style="left:345px;top:583px;width:75px;height:27px;background:#ffffff;"></div><div style="left:421px;top:583px;width:39px;height:27px;background:#fdf9f6;"></div><div style="left:461px;top:583px;width:75px;height:27px;background:#fdf9f6;"></div><div style="left:537px;top:583px;width:39px;height:27px;background:#fdf9f6;"></div><div style="left:577px;top:583px;width:63px;height:27px;background:#f0f7fb;"></div><div style="left:641px;top:583px;width:64px;height:27px;background:#f0f7fb;"></div><div style="left:706px;top:583px;width:63px;height:27px;background:#f0f7fb;"></div><div style="left:770px;top:583px;width:38px;height:27px;background:#ffffff;"></div><div style="left:809px;top:583px;width:39px;height:27px;background:#ffffff;"></div><div style="left:849px;top:583px;width:56px;height:27px;background:#ffffff;"></div><div class="t" style="left:-2px;top:584px;width:54px;height:27px;line-height:27px;color:#fff;font-size:12px;text-align:center;"><span class="k">挪威杯</span></div><div class="t" style="left:55px;top:585px;width:74px;height:27px;line-height:27px;color:#333;font-size:12px;text-align:center;">24-05-08</div><div class="t" style="left:130px;top:584px;width:86px;height:27px;line-height:27px;color:#1a1a1a;font-size:12px;text-align:center;"><span class="k">诺霍斯</span></div><div class="t" style="left:217px;top:585px;width:88px;height:27px;line-height:27px;color:#333;font-size:12px;text-align:center;"><span style="color:#ff0000">2-3</span><span style="color:#333">(2-2)</span></div><div class="t" style="left:306px;top:585px;width:38px;height:27px;line-height:27px;color:#333;font-size:12px;text-align:center;">4-4</div><div class="t" style="left:345px;top:584px;width:75px;height:27px;line-height:27px;color:#008000;font-size:12px;text-align:center;"><span class="k">费德列斯</span></div><div class="t" style="left:421px;top:585px;width:39px;height:27px;line-height:27px;color:#333;font-size:12px;text-align:center;">0.78</div><div class="t" style="left:461px;top:584px;width:75px;height:27px;line-height:27px;color:#2255a6;font-size:12px;text-align:center;"><span style="color:#f00">*</span><span class="k">半</span>/<span class="k">一</span></div><div class="t" style="left:537px;top:585px;width:39px;height:27px;line-height:27px;color:#333;font-size:12px;text-align:center;">1.04</div><div class="t" style="left:577px;top:585px;width:63px;height:27px;line-height:27px;color:#333;font-size:12px;text-align:center;">4.31</div><div class="t" style="left:641px;top:585px;width:64px;height:27px;line-height:27px;color:#2255a6;font-size:12px;text-align:center;">3.67</div><div class="t" style="left:706px;top:585px;width:63px;height:27px;line-height:27px;color:#333;font-size:12px;text-align:center;">1.71</div><div class="t" style="left:770px;top:584px;width:38px;height:27px;line-height:27px;color:#ff0000;font-size:12px;text-align:center;"><span class="k">胜</span></div><div class="t" style="left:809px;top:584px;width:39px;height:27px;line-height:27px;color:#ff0000;font-size:12px;text-align:center;"><span class="k">赢</span></div><div class="t" style="left:849px;top:584px;width:56px;height:27px;line-height:27px;color:#ff0000;font-size:12px;text-align:center;"><span class="k">大</span></div><div style="left:0px;top:610px;width:905px;height:1px;background:#bfbfbf;"></div><div style="left:54px;top:583px;width:1px;height:27px;background:#bfbfbf;"></div><div style="left:129px;top:583px;width:1px;height:27px;background:#bfbfbf;"></div><div style="left:216px;top:583px;width:1px;height:27px;background:#bfbfbf;"></div><div style="left:305px;top:583px;width:1px;height:27px;background:#bfbfbf;"></div><div style="left:344px;top:583px;width:1px;height:27px;background:#bfbfbf;"></div><div style="left:420px;top:583px;width:1px;height:27px;background:#bfbfbf;"></div><div style="left:460px;top:583px;width:1px;height:27px;background:#bfbfbf;"></div><div style="left:536px;top:583px;width:1px;height:27px;background:#bfbfbf;"></div><div style="left:576px;top:583px;width:1px;height:27px;background:#bfbfbf;"></div><div style="left:640px;top:583px;width:1px;height:27px;background:#bfbfbf;"></div><div style="left:705px;top:583px;width:1px;height:27px;background:#bfbfbf;"></div><div style="left:769px;top:583px;width:1px;height:27px;background:#bfbfbf;"></div><div style="left:808px;top:583px;width:1px;height:27px;background:#bfbfbf;"></div><div style="left:848px;top:583px;width:1px;height:27px;background:#bfbfbf;"></div><div style="left:0px;top:611px;width:54px;height:27px;background:#666666;"></div><div style="left:55px;top:611px;width:74px;height:27px;background:#efefef;"></div><div style="left:130px;top:611px;width:86px;height:27px;background:#efefef;"></div><div style="left:217px;top:611px;width:88px;height:27px;background:#efefef;"></div><div style="left:306px;top:611px;width:38px;height:27px;background:#efefef;"></div><div style="left:345px;top:611px;width:75px;height:27px;background:#efefef;"></div><div style="left:421px;top:611px;width:39px;height:27px;background:#fdf9f6;"></div><div style="left:461px;top:611px;width:75px;height:27px;background:#fdf9f6;"></div><div style="left:537px;top:611px;width:39px;height:27px;background:#fdf9f6;"></div><div style="left:577px;top:611px;width:63px;height:27px;background:#f0f7fb;"></div><div style="left:641px;top:611px;width:64px;height:27px;background:#f0f7fb;"></div><div style="left:706px;top:611px;width:63px;height:27px;background:#f0f7fb;"></div><div style="left:770px;top:611px;width:38px;height:27px;background:#efefef;"></div><div style="left:809px;top:611px;width:39px;height:27px;background:#efefef;"></div><div style="left:849px;top:611px;width:56px;height:27px;background:#efefef;"></div><div class="t" style="left:-2px;top:612px;width:54px;height:27px;line-height:27px;color:#fff;font-size:12px;text-align:center;"><span class="k">挪超</span></div><div class="t" style="left:55px;top:613px;width:74px;height:27px;line-height:27px;color:#333;font-size:12px;text-align:center;">24-05-05</div><div class="t" style="left:130px;top:612px;width:86px;height:27px;line-height:27px;color:#1a1a1a;font-size:12px;text-align:center;"><span class="k">奥德格伦</span></div><div class="t" style="left:217px;top:613px;width:88px;height:27px;line-height:27px;color:#333;font-size:12px;text-align:center;"><span style="color:#ff0000">0-2</span><span style="color:#333">(0-0)</span></div><div class="t" style="left:306px;top:613px;width:38px;height:27px;line-height:27px;color:#333;font-size:12px;text-align:center;">1-5</div><div class="t" style="left:345px;top:612px;width:75px;height:27px;line-height:27px;color:#008000;font-size:12px;text-align:center;"><span class="k">费德列斯</span></div><div class="t" style="left:421px;top:613px;width:39px;height:27px;line-height:27px;color:#333;font-size:12px;text-align:center;">0.94</div><div class="t" style="left:461px;top:612px;width:75px;height:27px;line-height:27px;color:#2255a6;font-size:12px;text-align:center;"><span style="color:#f00">*</span><span class="k">平</span>/<span class="k">半</span></div><div class="t" style="left:537px;top:613px;width:39px;height:27px;line-height:27px;color:#333;font-size:12px;text-align:center;">0.94</div><div class="t" style="left:577px;top:613px;width:63px;height:27px;line-height:27px;color:#333;font-size:12px;text-align:center;">3.16</div><div class="t" style="left:641px;top:613px;width:64px;height:27px;line-height:27px;color:#2255a6;font-size:12px;text-align:center;">3.38</div><div class="t" style="left:706px;top:613px;width:63px;height:27px;line-height:27px;color:#333;font-size:12px;text-align:center;">2.15</div><div class="t" style="left:770px;top:612px;width:38px;height:27px;line-height:27px;color:#ff0000;font-size:12px;text-align:center;"><span class="k">胜</span></div><div class="t" style="left:809px;top:612px;width:39px;height:27px;line-height:27px;color:#ff0000;font-size:12px;text-align:center;"><span class="k">赢</span></div><div class="t" style="left:849px;top:612px;width:56px;height:27px;line-height:27px;color:#008000;font-size:12px;text-align:center;"><span class="k">小</span></div><div style="left:0px;top:638px;width:905px;height:1px;background:#bfbfbf;"></div><div style="left:54px;top:611px;width:1px;height:27px;background:#bfbfbf;"></div><div style="left:129px;top:611px;width:1px;height:27px;background:#bfbfbf;"></div><div style="left:216px;top:611px;width:1px;height:27px;background:#bfbfbf;"></div><div style="left:305px;top:611px;width:1px;height:27px;background:#bfbfbf;"></div><div style="left:344px;top:611px;width:1px;height:27px;background:#bfbfbf;"></div><div style="left:420px;top:611px;width:1px;height:27px;background:#bfbfbf;"></div><div style="left:460px;top:611px;width:1px;height:27px;background:#bfbfbf;"></div><div style="left:536px;top:611px;width:1px;height:27px;background:#bfbfbf;"></div><div style="left:576px;top:611px;width:1px;height:27px;background:#bfbfbf;"></div><div style="left:640px;top:611px;width:1px;height:27px;background:#bfbfbf;"></div><div style="left:705px;top:611px;width:1px;height:27px;background:#bfbfbf;"></div><div style="left:769px;top:611px;width:1px;height:27px;background:#bfbfbf;"></div><div style="left:808px;top:611px;width:1px;height:27px;background:#bfbfbf;"></div><div style="left:848px;top:611px;width:1px;height:27px;background:#bfbfbf;"></div><div style="left:0px;top:639px;width:54px;height:27px;background:#e08b38;"></div><div style="left:55px;top:639px;width:74px;height:27px;background:#ffffff;"></div><div style="left:130px;top:639px;width:86px;height:27px;background:#ffffff;"></div><div style="left:217px;top:639px;width:88px;height:27px;background:#ffffff;"></div><div style="left:306px;top:639px;width:38px;height:27px;background:#ffffff;"></div><div style="left:345px;top:639px;width:75px;height:27px;background:#ffffff;"></div><div style="left:421px;top:639px;width:39px;height:27px;background:#fdf9f6;"></div><div style="left:461px;top:639px;width:75px;height:27px;background:#fdf9f6;"></div><div style="left:537px;top:639px;width:39px;height:27px;background:#fdf9f6;"></div><div style="left:577px;top:639px;width:63px;height:27px;background:#f0f7fb;"></div><div style="left:641px;top:639px;width:64px;height:27px;background:#f0f7fb;"></div><div style="left:706px;top:639px;width:63px;height:27px;background:#f0f7fb;"></div><div style="left:770px;top:639px;width:38px;height:27px;background:#ffffff;"></div><div style="left:809px;top:639px;width:39px;height:27px;background:#ffffff;"></div><div style="left:849px;top:639px;width:56px;height:27px;background:#ffffff;"></div><div class="t" style="left:-2px;top:640px;width:54px;height:27px;line-height:27px;color:#fff;font-size:12px;text-align:center;"><span class="k">挪威杯</span></div><div class="t" style="left:55px;top:641px;width:74px;height:27px;line-height:27px;color:#333;font-size:12px;text-align:center;">24-05-01</div><div class="t" style="left:130px;top:640px;width:86px;height:27px;line-height:27px;color:#008000;font-size:12px;text-align:center;"><span class="k">费德列斯</span></div><div class="t" style="left:217px;top:641px;width:88px;height:27px;line-height:27px;color:#333;font-size:12px;text-align:center;"><span style="color:#ff0000">1-0</span><span style="color:#333">(0-0)</span></div><div class="t" style="left:306px;top:641px;width:38px;height:27px;line-height:27px;color:#333;font-size:12px;text-align:center;">4-6</div><div class="t" style="left:345px;top:640px;width:75px;height:27px;line-height:27px;color:#1a1a1a;font-size:12px;text-align:center;"><span class="k">罗森博格</span></div><div class="t" style="left:421px;top:641px;width:39px;height:27px;line-height:27px;color:#333;font-size:12px;text-align:center;">0.84</div><div class="t" style="left:461px;top:640px;width:75px;height:27px;line-height:27px;color:#2255a6;font-size:12px;text-align:center;"><span class="k">平手</span></div><div class="t" style="left:537px;top:641px;width:39px;height:27px;line-height:27px;color:#333;font-size:12px;text-align:center;">0.98</div><div class="t" style="left:577px;top:641px;width:63px;height:27px;line-height:27px;color:#333;font-size:12px;text-align:center;">2.39</div><div class="t" style="left:641px;top:641px;width:64px;height:27px;line-height:27px;color:#2255a6;font-size:12px;text-align:center;">3.37</div><div class="t" style="left:706px;top:641px;width:63px;height:27px;line-height:27px;color:#333;font-size:12px;text-align:center;">2.63</div><div class="t" style="left:770px;top:640px;width:38px;height:27px;line-height:27px;color:#ff0000;font-size:12px;text-align:center;"><span class="k">胜</span></div><div class="t" style="left:809px;top:640px;width:39px;height:27px;line-height:27px;color:#ff0000;font-size:12px;text-align:center;"><span class="k">赢</span></div><div class="t" style="left:849px;top:640px;width:56px;height:27px;line-height:27px;color:#008000;font-size:12px;text-align:center;"><span class="k">小</span></div><div style="left:0px;top:666px;width:905px;height:1px;background:#bfbfbf;"></div><div style="left:54px;top:639px;width:1px;height:27px;background:#bfbfbf;"></div><div style="left:129px;top:639px;width:1px;height:27px;background:#bfbfbf;"></div><div style="left:216px;top:639px;width:1px;height:27px;background:#bfbfbf;"></div><div style="left:305px;top:639px;width:1px;height:27px;background:#bfbfbf;"></div><div style="left:344px;top:639px;width:1px;height:27px;background:#bfbfbf;"></div><div style="left:420px;top:639px;width:1px;height:27px;background:#bfbfbf;"></div><div style="left:460px;top:639px;width:1px;height:27px;background:#bfbfbf;"></div><div style="left:536px;top:639px;width:1px;height:27px;background:#bfbfbf;"></div><div style="left:576px;top:639px;width:1px;height:27px;background:#bfbfbf;"></div><div style="left:640px;top:639px;width:1px;height:27px;background:#bfbfbf;"></div><div style="left:705px;top:639px;width:1px;height:27px;background:#bfbfbf;"></div><div style="left:769px;top:639px;width:1px;height:27px;background:#bfbfbf;"></div><div style="left:808px;top:639px;width:1px;height:27px;background:#bfbfbf;"></div><div style="left:848px;top:639px;width:1px;height:27px;background:#bfbfbf;"></div><div style="left:0px;top:667px;width:54px;height:27px;background:#666666;"></div><div style="left:55px;top:667px;width:74px;height:27px;background:#efefef;"></div><div style="left:130px;top:667px;width:86px;height:27px;background:#efefef;"></div><div style="left:217px;top:667px;width:88px;height:27px;background:#efefef;"></div><div style="left:306px;top:667px;width:38px;height:27px;background:#efefef;"></div><div style="left:345px;top:667px;width:75px;height:27px;background:#efefef;"></div><div style="left:421px;top:667px;width:39px;height:27px;background:#fdf9f6;"></div><div style="left:461px;top:667px;width:75px;height:27px;background:#fdf9f6;"></div><div style="left:537px;top:667px;width:39px;height:27px;background:#fdf9f6;"></div><div style="left:577px;top:667px;width:63px;height:27px;background:#f0f7fb;"></div><div style="left:641px;top:667px;width:64px;height:27px;background:#f0f7fb;"></div><div style="left:706px;top:667px;width:63px;height:27px;background:#f0f7fb;"></div><div style="left:770px;top:667px;width:38px;height:27px;background:#efefef;"></div><div style="left:809px;top:667px;width:39px;height:27px;background:#efefef;"></div><div style="left:849px;top:667px;width:56px;height:27px;background:#efefef;"></div><div class="t" style="left:-2px;top:668px;width:54px;height:27px;line-height:27px;color:#fff;font-size:12px;text-align:center;"><span class="k">挪超</span></div><div class="t" style="left:55px;top:669px;width:74px;height:27px;line-height:27px;color:#333;font-size:12px;text-align:center;">24-04-28</div><div class="t" style="left:130px;top:668px;width:86px;height:27px;line-height:27px;color:#008000;font-size:12px;text-align:center;"><span class="k">费德列斯</span></div><div class="t" style="left:217px;top:669px;width:88px;height:27px;line-height:27px;color:#333;font-size:12px;text-align:center;"><span style="color:#ff0000">1-0</span><span style="color:#333">(1-0)</span></div><div class="t" style="left:306px;top:669px;width:38px;height:27px;line-height:27px;color:#333;font-size:12px;text-align:center;">5-6</div><div class="t" style="left:345px;top:668px;width:75px;height:27px;line-height:27px;color:#1a1a1a;font-size:12px;text-align:center;"><span class="k">桑德菲杰</span></div><div class="t" style="left:421px;top:669px;width:39px;height:27px;line-height:27px;color:#333;font-size:12px;text-align:center;">0.89</div><div class="t" style="left:461px;top:668px;width:75px;height:27px;line-height:27px;color:#2255a6;font-size:12px;text-align:center;"><span class="k">半球</span></div><div class="t" style="left:537px;top:669px;width:39px;height:27px;line-height:27px;color:#333;font-size:12px;text-align:center;">0.99</div><div class="t" style="left:577px;top:669px;width:63px;height:27px;line-height:27px;color:#333;font-size:12px;text-align:center;">1.93</div><div class="t" style="left:641px;top:669px;width:64px;height:27px;line-height:27px;color:#2255a6;font-size:12px;text-align:center;">3.36</div><div class="t" style="left:706px;top:669px;width:63px;height:27px;line-height:27px;color:#333;font-size:12px;text-align:center;">3.82</div><div class="t" style="left:770px;top:668px;width:38px;height:27px;line-height:27px;color:#ff0000;font-size:12px;text-align:center;"><span class="k">胜</span></div><div class="t" style="left:809px;top:668px;width:39px;height:27px;line-height:27px;color:#ff0000;font-size:12px;text-align:center;"><span class="k">赢</span></div><div class="t" style="left:849px;top:668px;width:56px;height:27px;line-height:27px;color:#008000;font-size:12px;text-align:center;"><span class="k">小</span></div><div style="left:0px;top:694px;width:905px;height:1px;background:#bfbfbf;"></div><div style="left:54px;top:667px;width:1px;height:27px;background:#bfbfbf;"></div><div style="left:129px;top:667px;width:1px;height:27px;background:#bfbfbf;"></div><div style="left:216px;top:667px;width:1px;height:27px;background:#bfbfbf;"></div><div style="left:305px;top:667px;width:1px;height:27px;background:#bfbfbf;"></div><div style="left:344px;top:667px;width:1px;height:27px;background:#bfbfbf;"></div><div style="left:420px;top:667px;width:1px;height:27px;background:#bfbfbf;"></div><div style="left:460px;top:667px;width:1px;height:27px;background:#bfbfbf;"></div><div style="left:536px;top:667px;width:1px;height:27px;background:#bfbfbf;"></div><div style="left:576px;top:667px;width:1px;height:27px;background:#bfbfbf;"></div><div style="left:640px;top:667px;width:1px;height:27px;background:#bfbfbf;"></div><div style="left:705px;top:667px;width:1px;height:27px;background:#bfbfbf;"></div><div style="left:769px;top:667px;width:1px;height:27px;background:#bfbfbf;"></div><div style="left:808px;top:667px;width:1px;height:27px;background:#bfbfbf;"></div><div style="left:848px;top:667px;width:1px;height:27px;background:#bfbfbf;"></div><div style="left:0px;top:695px;width:54px;height:27px;background:#e08b38;"></div><div style="left:55px;top:695px;width:74px;height:27px;background:#ffffff;"></div><div style="left:130px;top:695px;width:86px;height:27px;background:#ffffff;"></div><div style="left:217px;top:695px;width:88px;height:27px;background:#ffffff;"></div><div style="left:306px;top:695px;width:38px;height:27px;background:#ffffff;"></div><div style="left:345px;top:695px;width:75px;height:27px;background:#ffffff;"></div><div style="left:421px;top:695px;width:39px;height:27px;background:#fdf9f6;"></div><div style="left:461px;top:695px;width:75px;height:27px;background:#fdf9f6;"></div><div style="left:537px;top:695px;width:39px;height:27px;background:#fdf9f6;"></div><div style="left:577px;top:695px;width:63px;height:27px;background:#f0f7fb;"></div><div style="left:641px;top:695px;width:64px;height:27px;background:#f0f7fb;"></div><div style="left:706px;top:695px;width:63px;height:27px;background:#f0f7fb;"></div><div style="left:770px;top:695px;width:38px;height:27px;background:#ffffff;"></div><div style="left:809px;top:695px;width:39px;height:27px;background:#ffffff;"></div><div style="left:849px;top:695px;width:56px;height:27px;background:#ffffff;"></div><div class="t" style="left:-2px;top:696px;width:54px;height:27px;line-height:27px;color:#fff;font-size:12px;text-align:center;"><span class="k">挪威杯</span></div><div class="t" style="left:55px;top:697px;width:74px;height:27px;line-height:27px;color:#333;font-size:12px;text-align:center;">24-04-25</div><div class="t" style="left:130px;top:696px;width:86px;height:27px;line-height:27px;color:#1a1a1a;font-size:12px;text-align:center;">EIK<span class="k">通</span></div><div class="t" style="left:217px;top:697px;width:88px;height:27px;line-height:27px;color:#333;font-size:12px;text-align:center;"><span style="color:#ff0000">2-5</span><span style="color:#333">(1-2)</span></div><div class="t" style="left:306px;top:697px;width:38px;height:27px;line-height:27px;color:#333;font-size:12px;text-align:center;">2-5</div><div class="t" style="left:345px;top:696px;width:75px;height:27px;line-height:27px;color:#008000;font-size:12px;text-align:center;"><span class="k">费德列斯</span></div><div class="t" style="left:421px;top:697px;width:39px;height:27px;line-height:27px;color:#333;font-size:12px;text-align:center;">0.75</div><div class="t" style="left:461px;top:696px;width:75px;height:27px;line-height:27px;color:#2255a6;font-size:12px;text-align:center;"><span style="color:#f00">*</span><span class="k">一</span>/<span class="k">球半</span></div><div class="t" style="left:537px;top:697px;width:39px;height:27px;line-height:27px;color:#333;font-size:12px;text-align:center;">1.07</div><div class="t" style="left:577px;top:697px;width:63px;height:27px;line-height:27px;color:#333;font-size:12px;text-align:center;">7.02</div><div class="t" style="left:641px;top:697px;width:64px;height:27px;line-height:27px;color:#2255a6;font-size:12px;text-align:center;">5.03</div><div class="t" style="left:706px;top:697px;width:63px;height:27px;line-height:27px;color:#333;font-size:12px;text-align:center;">1.33</div><div class="t" style="left:770px;top:696px;width:38px;height:27px;line-height:27px;color:#ff0000;font-size:12px;text-align:center;"><span class="k">胜</span></div><div class="t" style="left:809px;top:696px;width:39px;height:27px;line-height:27px;color:#ff0000;font-size:12px;text-align:center;"><span class="k">赢</span></div><div class="t" style="left:849px;top:696px;width:56px;height:27px;line-height:27px;color:#ff0000;font-size:12px;text-align:center;"><span class="k">大</span></div><div style="left:0px;top:722px;width:905px;height:1px;background:#bfbfbf;"></div><div style="left:54px;top:695px;width:1px;height:27px;background:#bfbfbf;"></div><div style="left:129px;top:695px;width:1px;height:27px;background:#bfbfbf;"></div><div style="left:216px;top:695px;width:1px;height:27px;background:#bfbfbf;"></div><div style="left:305px;top:695px;width:1px;height:27px;background:#bfbfbf;"></div><div style="left:344px;top:695px;width:1px;height:27px;background:#bfbfbf;"></div><div style="left:420px;top:695px;width:1px;height:27px;background:#bfbfbf;"></div><div style="left:460px;top:695px;width:1px;height:27px;background:#bfbfbf;"></div><div style="left:536px;top:695px;width:1px;height:27px;background:#bfbfbf;"></div><div style="left:576px;top:695px;width:1px;height:27px;background:#bfbfbf;"></div><div style="left:640px;top:695px;width:1px;height:27px;background:#bfbfbf;"></div><div style="left:705px;top:695px;width:1px;height:27px;background:#bfbfbf;"></div><div style="left:769px;top:695px;width:1px;height:27px;background:#bfbfbf;"></div><div style="left:808px;top:695px;width:1px;height:27px;background:#bfbfbf;"></div><div style="left:848px;top:695px;width:1px;height:27px;background:#bfbfbf;"></div><div style="left:0px;top:723px;width:54px;height:27px;background:#666666;"></div><div style="left:55px;top:723px;width:74px;height:27px;background:#efefef;"></div><div style="left:130px;top:723px;width:86px;height:27px;background:#efefef;"></div><div style="left:217px;top:723px;width:88px;height:27px;background:#efefef;"></div><div style="left:306px;top:723px;width:38px;height:27px;background:#efefef;"></div><div style="left:345px;top:723px;width:75px;height:27px;background:#efefef;"></div><div style="left:421px;top:723px;width:39px;height:27px;background:#fdf9f6;"></div><div style="left:461px;top:723px;width:75px;height:27px;background:#fdf9f6;"></div><div style="left:537px;top:723px;width:39px;height:27px;background:#fdf9f6;"></div><div style="left:577px;top:723px;width:63px;height:27px;background:#f0f7fb;"></div><div style="left:641px;top:723px;width:64px;height:27px;background:#f0f7fb;"></div><div style="left:706px;top:723px;width:63px;height:27px;background:#f0f7fb;"></div><div style="left:770px;top:723px;width:38px;height:27px;background:#efefef;"></div><div style="left:809px;top:723px;width:39px;height:27px;background:#efefef;"></div><div style="left:849px;top:723px;width:56px;height:27px;background:#efefef;"></div><div class="t" style="left:-2px;top:724px;width:54px;height:27px;line-height:27px;color:#fff;font-size:12px;text-align:center;"><span class="k">挪超</span></div><div class="t" style="left:55px;top:725px;width:74px;height:27px;line-height:27px;color:#333;font-size:12px;text-align:center;">24-04-21</div><div class="t" style="left:130px;top:724px;width:86px;height:27px;line-height:27px;color:#1a1a1a;font-size:12px;text-align:center;"><span class="k">维京</span></div><div class="t" style="left:217px;top:725px;width:88px;height:27px;line-height:27px;color:#333;font-size:12px;text-align:center;"><span style="color:#ff0000">1-1</span><span style="color:#333">(1-1)</span></div><div class="t" style="left:306px;top:725px;width:38px;height:27px;line-height:27px;color:#333;font-size:12px;text-align:center;">4-3</div><div class="t" style="left:345px;top:724px;width:75px;height:27px;line-height:27px;color:#008000;font-size:12px;text-align:center;"><span class="k">费德列斯</span></div><div class="t" style="left:421px;top:725px;width:39px;height:27px;line-height:27px;color:#333;font-size:12px;text-align:center;">0.86</div><div class="t" style="left:461px;top:724px;width:75px;height:27px;line-height:27px;color:#2255a6;font-size:12px;text-align:center;"><span class="k">半球</span></div><div class="t" style="left:537px;top:725px;width:39px;height:27px;line-height:27px;color:#333;font-size:12px;text-align:center;">1.04</div><div class="t" style="left:577px;top:725px;width:63px;height:27px;line-height:27px;color:#333;font-size:12px;text-align:center;">1.72</div><div class="t" style="left:641px;top:725px;width:64px;height:27px;line-height:27px;color:#2255a6;font-size:12px;text-align:center;">3.88</div><div class="t" style="left:706px;top:725px;width:63px;height:27px;line-height:27px;color:#333;font-size:12px;text-align:center;">4.21</div><div class="t" style="left:770px;top:724px;width:38px;height:27px;line-height:27px;color:#0000ff;font-size:12px;text-align:center;"><span class="k">平</span></div><div class="t" style="left:809px;top:724px;width:39px;height:27px;line-height:27px;color:#ff0000;font-size:12px;text-align:center;"><span class="k">赢</span></div><div class="t" style="left:849px;top:724px;width:56px;height:27px;line-height:27px;color:#008000;font-size:12px;text-align:center;"><span class="k">小</span></div><div style="left:0px;top:750px;width:905px;height:1px;background:#bfbfbf;"></div><div style="left:54px;top:723px;width:1px;height:27px;background:#bfbfbf;"></div><div style="left:129px;top:723px;width:1px;height:27px;background:#bfbfbf;"></div><div style="left:216px;top:723px;width:1px;height:27px;background:#bfbfbf;"></div><div style="left:305px;top:723px;width:1px;height:27px;background:#bfbfbf;"></div><div style="left:344px;top:723px;width:1px;height:27px;background:#bfbfbf;"></div><div style="left:420px;top:723px;width:1px;height:27px;background:#bfbfbf;"></div><div style="left:460px;top:723px;width:1px;height:27px;background:#bfbfbf;"></div><div style="left:536px;top:723px;width:1px;height:27px;background:#bfbfbf;"></div><div style="left:576px;top:723px;width:1px;height:27px;background:#bfbfbf;"></div><div style="left:640px;top:723px;width:1px;height:27px;background:#bfbfbf;"></div><div style="left:705px;top:723px;width:1px;height:27px;background:#bfbfbf;"></div><div style="left:769px;top:723px;width:1px;height:27px;background:#bfbfbf;"></div><div style="left:808px;top:723px;width:1px;height:27px;background:#bfbfbf;"></div><div style="left:848px;top:723px;width:1px;height:27px;background:#bfbfbf;"></div><div style="left:0px;top:751px;width:905px;height:27px;background:#fff;"></div><div class="t sum" style="left:284px;top:756px;height:18px;line-height:18px;font-size:12px"><span class="k">近</span><span style="color:#ff0000">10</span><span class="k">场</span>,<span class="k">胜</span>8<span class="k">平</span>2<span class="k">负</span>0, <span class="k">胜率</span>:</div><div class="t" style="left:416px;top:755px;width:35px;height:18px;line-height:18px;background:#ff0000;color:#fff;font-size:13px;text-align:center">80%</div><div class="t sum" style="left:454px;top:756px;height:18px;line-height:18px;font-size:12px"><span class="k">赢率</span>:</div><div class="t" style="left:483px;top:755px;width:35px;height:18px;line-height:18px;background:#ff0000;color:#fff;font-size:13px;text-align:center">90%</div><div class="t sum" style="left:520px;top:756px;height:18px;line-height:18px;font-size:12px"><span class="k">大</span>:</div><div class="t sum" style="left:537px;top:756px;height:18px;line-height:18px;font-size:12px"><span style="color:#0000ff">50%</span></div><div class="t sum" style="left:566px;top:756px;height:18px;line-height:18px;font-size:12px"><span class="k">单率</span>:</div><div class="t sum" style="left:593px;top:756px;height:18px;line-height:18px;font-size:12px"><span style="color:#ff0000">70%</span></div><div style="left:0px;top:778px;width:905px;height:1px;background:#cfc9c6;"></div><div style="left:0px;top:779px;width:905px;height:1px;background:#0b8fd4;"></div><div style="left:0px;top:780px;width:905px;height:20px;background:#1b95d4;"></div><div class="t" style="left:0;top:781px;width:905px;height:28px;line-height:28px;text-align:center;font-size:14px;font-weight:bold;color:#fff">联赛盘路走势</div></body></html>
